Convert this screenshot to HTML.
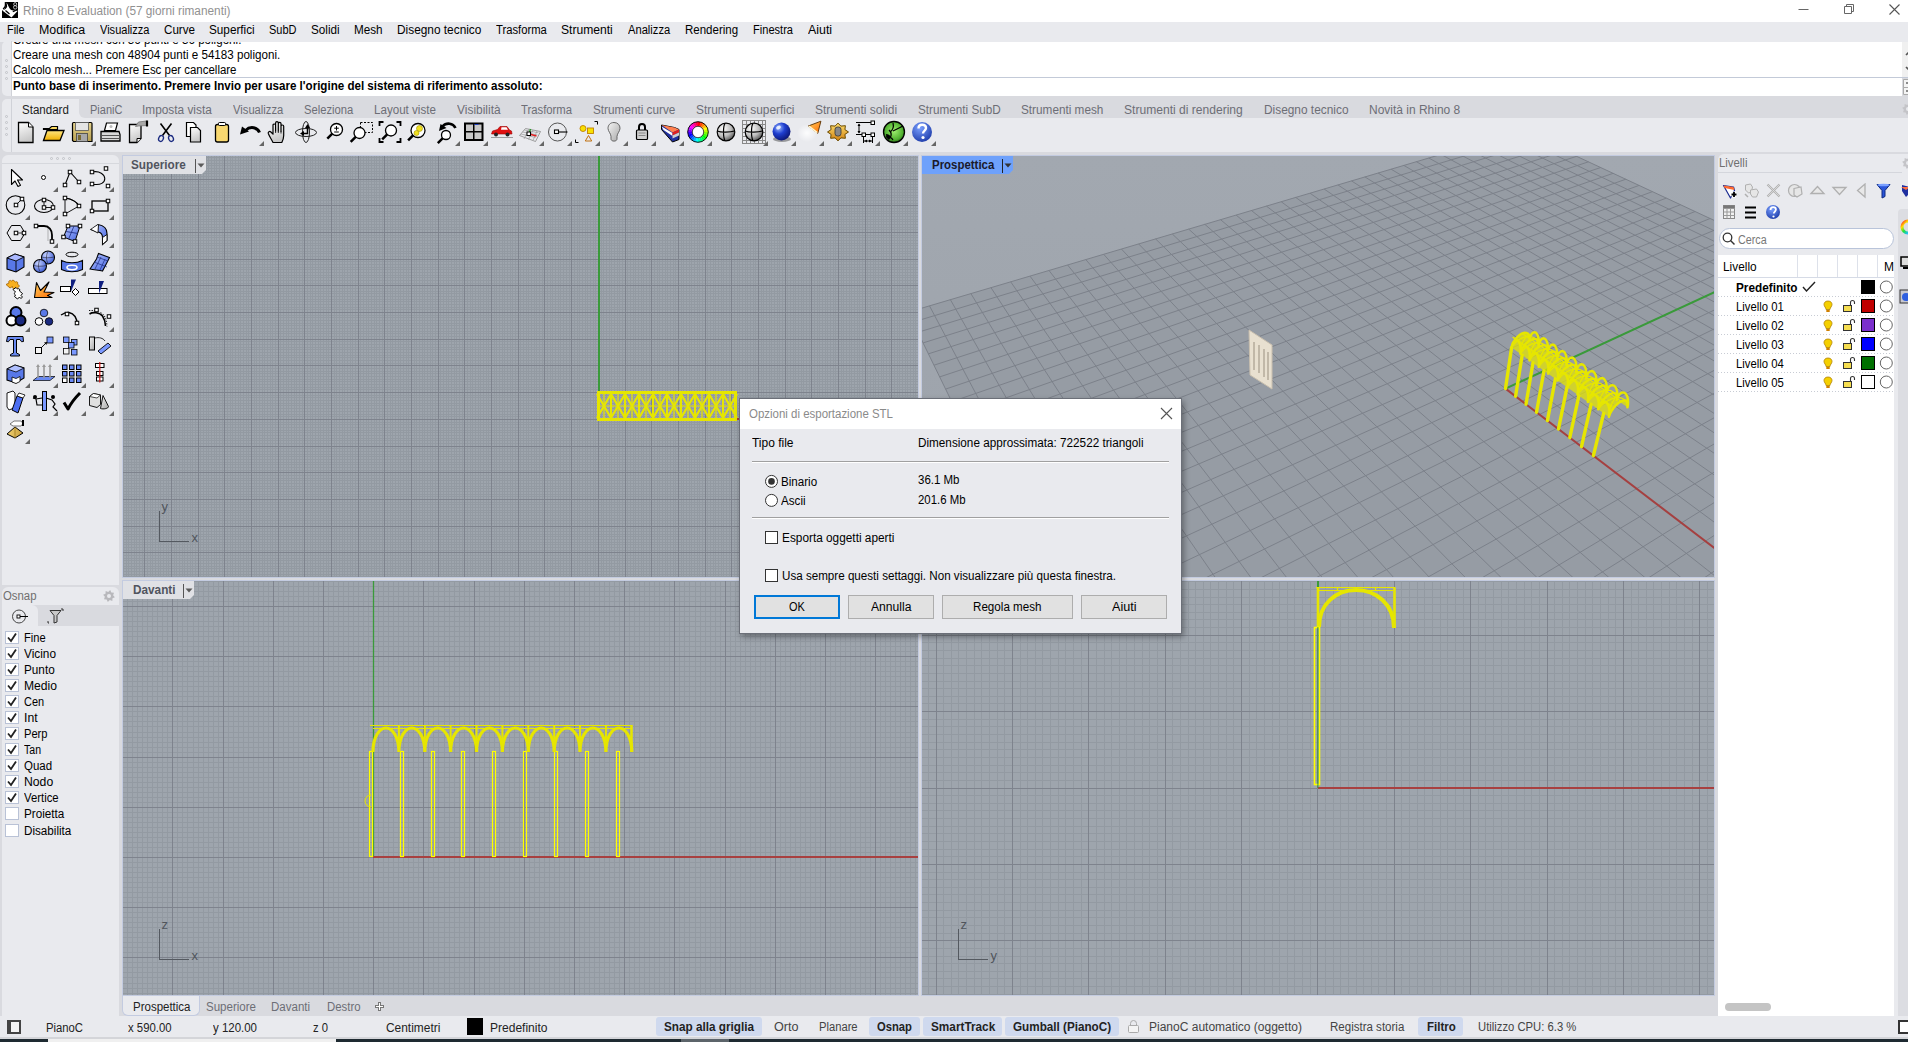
<!DOCTYPE html><html><head><meta charset="utf-8"><style>
html,body{margin:0;padding:0;}
body{width:1908px;height:1042px;overflow:hidden;position:relative;background:#d9dadf;font-family:"Liberation Sans",sans-serif;}
svg{overflow:hidden;display:block}
</style></head><body>
<div style="position:absolute;left:0px;top:0px;width:1908px;height:22px;background:#fff"></div>
<svg style="position:absolute;left:0px;top:0px;" width="22" height="22" viewBox="0 0 22 22"><path d="M5.5 2H18V18H2V10.5L4 9.5C5.5 8 6 5 5.5 2z" fill="#000"/><path d="M6.5 2.5C8 4.5 8.8 8 10.8 9.8 12.8 11 15.5 11 17.8 10.8L11.5 17.5 2.3 10.4C4.8 9.8 6.8 8.4 7.2 6.5z" fill="#fff"/><path d="M5.3 2.2C5.8 5 5 8 3 8.8" stroke="#000" stroke-width="1.3" fill="none"/><path d="M5.5 10.5l4 3.5" stroke="#000" stroke-width="1.2"/><path d="M12.8 11.8l2.5-1" stroke="#000" stroke-width="1.2"/><ellipse cx="15.2" cy="4.2" rx="1.5" ry="1.6" fill="none" stroke="#ccc" stroke-width="0.9"/><ellipse cx="15.2" cy="7.3" rx="1.7" ry="1.8" fill="none" stroke="#ccc" stroke-width="0.9"/></svg>
<div style="position:absolute;left:23px;top:5px;font:normal 12px/12px 'Liberation Sans',sans-serif;color:#919191;white-space:nowrap;transform:scaleX(0.9844);transform-origin:0 0;">Rhino 8 Evaluation (57 giorni rimanenti)</div>
<svg style="position:absolute;left:1790px;top:0px;" width="118" height="22" viewBox="0 0 118 22"><path d="M8.5 9.5h10" stroke="#666" stroke-width="1"/><path d="M56.5 6.5V4.5h7v7h-2M54.5 6.5h7v7h-7z" stroke="#666" fill="none" stroke-width="1"/><path d="M99.5 4.5l10 10M109.5 4.5l-10 10" stroke="#555" stroke-width="1.1"/></svg>
<div style="position:absolute;left:0px;top:22px;width:1908px;height:20px;background:#e9eaee"></div>
<div style="position:absolute;left:7.0px;top:24px;font:normal 12px/12px 'Liberation Sans',sans-serif;color:#000;white-space:nowrap;transform:scaleX(0.9051);transform-origin:0 0;">File</div>
<div style="position:absolute;left:39.0px;top:24px;font:normal 12px/12px 'Liberation Sans',sans-serif;color:#000;white-space:nowrap;transform:scaleX(1.0317);transform-origin:0 0;">Modifica</div>
<div style="position:absolute;left:99.7px;top:24px;font:normal 12px/12px 'Liberation Sans',sans-serif;color:#000;white-space:nowrap;transform:scaleX(0.9200);transform-origin:0 0;">Visualizza</div>
<div style="position:absolute;left:163.5px;top:24px;font:normal 12px/12px 'Liberation Sans',sans-serif;color:#000;white-space:nowrap;transform:scaleX(0.9685);transform-origin:0 0;">Curve</div>
<div style="position:absolute;left:208.5px;top:24px;font:normal 12px/12px 'Liberation Sans',sans-serif;color:#000;white-space:nowrap;transform:scaleX(0.9788);transform-origin:0 0;">Superfici</div>
<div style="position:absolute;left:268.5px;top:24px;font:normal 12px/12px 'Liberation Sans',sans-serif;color:#000;white-space:nowrap;transform:scaleX(0.9161);transform-origin:0 0;">SubD</div>
<div style="position:absolute;left:310.5px;top:24px;font:normal 12px/12px 'Liberation Sans',sans-serif;color:#000;white-space:nowrap;transform:scaleX(0.9745);transform-origin:0 0;">Solidi</div>
<div style="position:absolute;left:353.5px;top:24px;font:normal 12px/12px 'Liberation Sans',sans-serif;color:#000;white-space:nowrap;transform:scaleX(0.9747);transform-origin:0 0;">Mesh</div>
<div style="position:absolute;left:396.7px;top:24px;font:normal 12px/12px 'Liberation Sans',sans-serif;color:#000;white-space:nowrap;transform:scaleX(0.9885);transform-origin:0 0;">Disegno tecnico</div>
<div style="position:absolute;left:496.1px;top:24px;font:normal 12px/12px 'Liberation Sans',sans-serif;color:#000;white-space:nowrap;transform:scaleX(0.9368);transform-origin:0 0;">Trasforma</div>
<div style="position:absolute;left:561.4px;top:24px;font:normal 12px/12px 'Liberation Sans',sans-serif;color:#000;white-space:nowrap;transform:scaleX(1.0087);transform-origin:0 0;">Strumenti</div>
<div style="position:absolute;left:627.7px;top:24px;font:normal 12px/12px 'Liberation Sans',sans-serif;color:#000;white-space:nowrap;transform:scaleX(0.9304);transform-origin:0 0;">Analizza</div>
<div style="position:absolute;left:684.8px;top:24px;font:normal 12px/12px 'Liberation Sans',sans-serif;color:#000;white-space:nowrap;transform:scaleX(0.9590);transform-origin:0 0;">Rendering</div>
<div style="position:absolute;left:752.8px;top:24px;font:normal 12px/12px 'Liberation Sans',sans-serif;color:#000;white-space:nowrap;transform:scaleX(0.9228);transform-origin:0 0;">Finestra</div>
<div style="position:absolute;left:807.8px;top:24px;font:normal 12px/12px 'Liberation Sans',sans-serif;color:#000;white-space:nowrap;transform:scaleX(1.0324);transform-origin:0 0;">Aiuti</div>
<div style="position:absolute;left:2px;top:41px;width:10px;height:55px;background:#e9eaee;border-radius:5px 0 0 5px"></div>
<div style="position:absolute;left:11px;top:41px;width:1px;height:55px;background:#d0d2d8"></div>
<div style="position:absolute;left:12px;top:42px;width:1890px;height:54px;background:#fff"></div>
<div style="position:absolute;left:1902px;top:42px;width:6px;height:35px;background:#f0f0f0"></div>
<svg style="position:absolute;left:1902px;top:42px;" width="6" height="54" viewBox="0 0 6 54"><path d="M4 13l2.5-2.5M4 25l2.5 2.5" stroke="#555" stroke-width="1.6"/><path d="M1.5 37.5h5v8h-5zM1.5 45.5h5v7h-5z" stroke="#aaa" fill="#f4f4f4" stroke-width="1"/><path d="M4 41h3M4 49h3" stroke="#222" stroke-width="1"/></svg>
<div style="position:absolute;left:12px;top:77px;width:1896px;height:1px;background:#c3cad8"></div>
<div style="position:absolute;left:5px;top:58.5px;width:3px;height:3px;border:1px solid #c0c2c8;border-radius:50%;box-sizing:border-box"></div>
<div style="position:absolute;left:5px;top:64.5px;width:3px;height:3px;border:1px solid #c0c2c8;border-radius:50%;box-sizing:border-box"></div>
<div style="position:absolute;left:5px;top:70.5px;width:3px;height:3px;border:1px solid #c0c2c8;border-radius:50%;box-sizing:border-box"></div>
<div style="position:absolute;left:5px;top:76.5px;width:3px;height:3px;border:1px solid #c0c2c8;border-radius:50%;box-sizing:border-box"></div>
<div style="position:absolute;left:12px;top:42px;width:1890px;height:35px;overflow:hidden"><div style="position:absolute;left:1px;top:-8px;font:12px/12px 'Liberation Sans';color:#000;white-space:nowrap;transform:scaleX(0.967);transform-origin:0 0">Creare una mesh con 36 punti e 36 poligoni.</div></div>
<div style="position:absolute;left:13px;top:49px;font:normal 12px/12px 'Liberation Sans',sans-serif;color:#000;white-space:nowrap;transform:scaleX(0.9674);transform-origin:0 0;">Creare una mesh con 48904 punti e 54183 poligoni.</div>
<div style="position:absolute;left:13px;top:64px;font:normal 12px/12px 'Liberation Sans',sans-serif;color:#000;white-space:nowrap;transform:scaleX(0.9547);transform-origin:0 0;">Calcolo mesh... Premere Esc per cancellare</div>
<div style="position:absolute;left:13px;top:80px;font:bold 12px/12px 'Liberation Sans',sans-serif;color:#000;white-space:nowrap;transform:scaleX(0.9657);transform-origin:0 0;">Punto base di inserimento. Premere Invio per usare l'origine del sistema di riferimento assoluto:</div>
<div style="position:absolute;left:2px;top:99px;width:1906px;height:53px;background:#e9eaee;border-radius:5px 0 0 5px"></div>
<div style="position:absolute;left:11px;top:99px;width:1px;height:53px;background:#d0d2d8"></div>
<div style="position:absolute;left:79px;top:99px;width:1829px;height:19px;background:#d9dadf;border-radius:0 0 0 6px"></div>
<div style="position:absolute;left:12px;top:99px;width:67px;height:19px;background:#e9eaee;border-radius:0 6px 0 0"></div>
<div style="position:absolute;left:5px;top:114.5px;width:3px;height:3px;border:1px solid #c0c2c8;border-radius:50%;box-sizing:border-box"></div>
<div style="position:absolute;left:5px;top:120.5px;width:3px;height:3px;border:1px solid #c0c2c8;border-radius:50%;box-sizing:border-box"></div>
<div style="position:absolute;left:5px;top:126.5px;width:3px;height:3px;border:1px solid #c0c2c8;border-radius:50%;box-sizing:border-box"></div>
<div style="position:absolute;left:5px;top:132.5px;width:3px;height:3px;border:1px solid #c0c2c8;border-radius:50%;box-sizing:border-box"></div>
<div style="position:absolute;left:22.1px;top:104px;font:normal 12px/12px 'Liberation Sans',sans-serif;color:#222;white-space:nowrap;transform:scaleX(0.9609);transform-origin:0 0;">Standard</div>
<div style="position:absolute;left:89.7px;top:104px;font:normal 12px/12px 'Liberation Sans',sans-serif;color:#6d6e76;white-space:nowrap;transform:scaleX(0.9166);transform-origin:0 0;">PianiC</div>
<div style="position:absolute;left:142.4px;top:104px;font:normal 12px/12px 'Liberation Sans',sans-serif;color:#6d6e76;white-space:nowrap;transform:scaleX(0.9874);transform-origin:0 0;">Imposta vista</div>
<div style="position:absolute;left:232.6px;top:104px;font:normal 12px/12px 'Liberation Sans',sans-serif;color:#6d6e76;white-space:nowrap;transform:scaleX(0.9348);transform-origin:0 0;">Visualizza</div>
<div style="position:absolute;left:303.7px;top:104px;font:normal 12px/12px 'Liberation Sans',sans-serif;color:#6d6e76;white-space:nowrap;transform:scaleX(0.9354);transform-origin:0 0;">Seleziona</div>
<div style="position:absolute;left:373.9px;top:104px;font:normal 12px/12px 'Liberation Sans',sans-serif;color:#6d6e76;white-space:nowrap;transform:scaleX(0.9666);transform-origin:0 0;">Layout viste</div>
<div style="position:absolute;left:456.7px;top:104px;font:normal 12px/12px 'Liberation Sans',sans-serif;color:#6d6e76;white-space:nowrap;transform:scaleX(0.9955);transform-origin:0 0;">Visibilità</div>
<div style="position:absolute;left:521.1px;top:104px;font:normal 12px/12px 'Liberation Sans',sans-serif;color:#6d6e76;white-space:nowrap;transform:scaleX(0.9405);transform-origin:0 0;">Trasforma</div>
<div style="position:absolute;left:593.0px;top:104px;font:normal 12px/12px 'Liberation Sans',sans-serif;color:#6d6e76;white-space:nowrap;transform:scaleX(0.9806);transform-origin:0 0;">Strumenti curve</div>
<div style="position:absolute;left:696.3px;top:104px;font:normal 12px/12px 'Liberation Sans',sans-serif;color:#6d6e76;white-space:nowrap;transform:scaleX(0.9913);transform-origin:0 0;">Strumenti superfici</div>
<div style="position:absolute;left:815.3px;top:104px;font:normal 12px/12px 'Liberation Sans',sans-serif;color:#6d6e76;white-space:nowrap;transform:scaleX(1.0021);transform-origin:0 0;">Strumenti solidi</div>
<div style="position:absolute;left:917.9px;top:104px;font:normal 12px/12px 'Liberation Sans',sans-serif;color:#6d6e76;white-space:nowrap;transform:scaleX(0.9775);transform-origin:0 0;">Strumenti SubD</div>
<div style="position:absolute;left:1021.2px;top:104px;font:normal 12px/12px 'Liberation Sans',sans-serif;color:#6d6e76;white-space:nowrap;transform:scaleX(0.9806);transform-origin:0 0;">Strumenti mesh</div>
<div style="position:absolute;left:1124.2px;top:104px;font:normal 12px/12px 'Liberation Sans',sans-serif;color:#6d6e76;white-space:nowrap;transform:scaleX(1.0063);transform-origin:0 0;">Strumenti di rendering</div>
<div style="position:absolute;left:1264.0px;top:104px;font:normal 12px/12px 'Liberation Sans',sans-serif;color:#6d6e76;white-space:nowrap;transform:scaleX(0.9897);transform-origin:0 0;">Disegno tecnico</div>
<div style="position:absolute;left:1368.8px;top:104px;font:normal 12px/12px 'Liberation Sans',sans-serif;color:#6d6e76;white-space:nowrap;transform:scaleX(0.9980);transform-origin:0 0;">Novità in Rhino 8</div>
<div style="position:absolute;left:2px;top:155px;width:117px;height:430px;background:#e9eaee;border-radius:6px 6px 0 0"></div>
<div style="position:absolute;left:2px;top:163px;width:117px;height:1px;background:#d6d8dd"></div>
<div style="position:absolute;left:50.0px;top:157px;width:3px;height:3px;border:1px solid #c0c2c8;border-radius:50%;box-sizing:border-box"></div>
<div style="position:absolute;left:56.0px;top:157px;width:3px;height:3px;border:1px solid #c0c2c8;border-radius:50%;box-sizing:border-box"></div>
<div style="position:absolute;left:62.0px;top:157px;width:3px;height:3px;border:1px solid #c0c2c8;border-radius:50%;box-sizing:border-box"></div>
<div style="position:absolute;left:68.0px;top:157px;width:3px;height:3px;border:1px solid #c0c2c8;border-radius:50%;box-sizing:border-box"></div>
<div style="position:absolute;left:2px;top:587px;width:117px;height:429px;background:#e9eaee;border-radius:6px 6px 0 0"></div>
<div style="position:absolute;left:2.5px;top:590px;font:normal 12px/12px 'Liberation Sans',sans-serif;color:#6f6f6f;white-space:nowrap;transform:scaleX(0.9475);transform-origin:0 0;">Osnap</div>
<div style="position:absolute;left:2px;top:605px;width:117px;height:21px;background:#d9dadf"></div>
<div style="position:absolute;left:38px;top:605px;width:81px;height:21px;background:#d9dadf;border-radius:0 0 0 6px"></div>
<div style="position:absolute;left:2px;top:605px;width:36px;height:21px;background:#e9eaee;border-radius:0 6px 0 0"></div>
<div style="position:absolute;left:2px;top:626px;width:117px;height:390px;background:#e9eaee"></div>
<div style="position:absolute;left:1718px;top:154px;width:190px;height:862px;background:#e9eaee;border-radius:6px 0 0 0"></div>
<div style="position:absolute;left:0px;top:1016px;width:1908px;height:21px;background:#e9eaee"></div>
<div style="position:absolute;left:0px;top:1037px;width:1908px;height:2px;background:#d4d5d9"></div>
<div style="position:absolute;left:0px;top:1039px;width:1908px;height:3px;background:#1e2a31"></div>
<div style="position:absolute;left:48px;top:1039px;width:288px;height:3px;background:#f0f0f0"></div>
<div style="position:absolute;left:681px;top:1039px;width:48px;height:3px;background:#5c646a"></div>
<div style="position:absolute;left:122px;top:155px;width:797px;height:423px;background:#c3cbe0"></div>
<svg style="position:absolute;left:123px;top:156px;" width="795" height="421" viewBox="0 0 795 421"><rect width="795" height="421" fill="#9ea5ad"/><path d="M0.5 0V421M3.5 0V421M5.5 0V421M8.5 0V421M11.5 0V421M13.5 0V421M16.5 0V421M19.5 0V421M24.5 0V421M27.5 0V421M29.5 0V421M32.5 0V421M35.5 0V421M37.5 0V421M40.5 0V421M43.5 0V421M45.5 0V421M51.5 0V421M53.5 0V421M56.5 0V421M59.5 0V421M61.5 0V421M64.5 0V421M67.5 0V421M69.5 0V421M72.5 0V421M77.5 0V421M80.5 0V421M83.5 0V421M85.5 0V421M88.5 0V421M91.5 0V421M93.5 0V421M96.5 0V421M99.5 0V421M104.5 0V421M107.5 0V421M109.5 0V421M112.5 0V421M115.5 0V421M117.5 0V421M120.5 0V421M123.5 0V421M125.5 0V421M131.5 0V421M133.5 0V421M136.5 0V421M139.5 0V421M141.5 0V421M144.5 0V421M147.5 0V421M149.5 0V421M152.5 0V421M157.5 0V421M160.5 0V421M163.5 0V421M165.5 0V421M168.5 0V421M171.5 0V421M173.5 0V421M176.5 0V421M179.5 0V421M184.5 0V421M187.5 0V421M189.5 0V421M192.5 0V421M195.5 0V421M197.5 0V421M200.5 0V421M203.5 0V421M205.5 0V421M211.5 0V421M213.5 0V421M216.5 0V421M219.5 0V421M221.5 0V421M224.5 0V421M227.5 0V421M229.5 0V421M232.5 0V421M237.5 0V421M240.5 0V421M243.5 0V421M245.5 0V421M248.5 0V421M251.5 0V421M253.5 0V421M256.5 0V421M259.5 0V421M264.5 0V421M267.5 0V421M269.5 0V421M272.5 0V421M275.5 0V421M277.5 0V421M280.5 0V421M283.5 0V421M285.5 0V421M291.5 0V421M293.5 0V421M296.5 0V421M299.5 0V421M301.5 0V421M304.5 0V421M307.5 0V421M309.5 0V421M312.5 0V421M317.5 0V421M320.5 0V421M323.5 0V421M325.5 0V421M328.5 0V421M331.5 0V421M333.5 0V421M336.5 0V421M339.5 0V421M344.5 0V421M347.5 0V421M349.5 0V421M352.5 0V421M355.5 0V421M357.5 0V421M360.5 0V421M363.5 0V421M365.5 0V421M371.5 0V421M373.5 0V421M376.5 0V421M379.5 0V421M381.5 0V421M384.5 0V421M387.5 0V421M389.5 0V421M392.5 0V421M397.5 0V421M400.5 0V421M403.5 0V421M405.5 0V421M408.5 0V421M411.5 0V421M413.5 0V421M416.5 0V421M419.5 0V421M424.5 0V421M427.5 0V421M429.5 0V421M432.5 0V421M435.5 0V421M437.5 0V421M440.5 0V421M443.5 0V421M446.5 0V421M451.5 0V421M454.5 0V421M456.5 0V421M459.5 0V421M462.5 0V421M464.5 0V421M467.5 0V421M470.5 0V421M472.5 0V421M478.5 0V421M480.5 0V421M483.5 0V421M486.5 0V421M488.5 0V421M491.5 0V421M494.5 0V421M496.5 0V421M499.5 0V421M504.5 0V421M507.5 0V421M510.5 0V421M512.5 0V421M515.5 0V421M518.5 0V421M520.5 0V421M523.5 0V421M526.5 0V421M531.5 0V421M534.5 0V421M536.5 0V421M539.5 0V421M542.5 0V421M544.5 0V421M547.5 0V421M550.5 0V421M552.5 0V421M558.5 0V421M560.5 0V421M563.5 0V421M566.5 0V421M568.5 0V421M571.5 0V421M574.5 0V421M576.5 0V421M579.5 0V421M584.5 0V421M587.5 0V421M590.5 0V421M592.5 0V421M595.5 0V421M598.5 0V421M600.5 0V421M603.5 0V421M606.5 0V421M611.5 0V421M614.5 0V421M616.5 0V421M619.5 0V421M622.5 0V421M624.5 0V421M627.5 0V421M630.5 0V421M632.5 0V421M638.5 0V421M640.5 0V421M643.5 0V421M646.5 0V421M648.5 0V421M651.5 0V421M654.5 0V421M656.5 0V421M659.5 0V421M664.5 0V421M667.5 0V421M670.5 0V421M672.5 0V421M675.5 0V421M678.5 0V421M680.5 0V421M683.5 0V421M686.5 0V421M691.5 0V421M694.5 0V421M696.5 0V421M699.5 0V421M702.5 0V421M704.5 0V421M707.5 0V421M710.5 0V421M712.5 0V421M718.5 0V421M720.5 0V421M723.5 0V421M726.5 0V421M728.5 0V421M731.5 0V421M734.5 0V421M736.5 0V421M739.5 0V421M744.5 0V421M747.5 0V421M750.5 0V421M752.5 0V421M755.5 0V421M758.5 0V421M760.5 0V421M763.5 0V421M766.5 0V421M771.5 0V421M774.5 0V421M776.5 0V421M779.5 0V421M782.5 0V421M784.5 0V421M787.5 0V421M790.5 0V421M792.5 0V421M0 1.5H795M0 4.5H795M0 7.5H795M0 9.5H795M0 12.5H795M0 15.5H795M0 17.5H795M0 20.5H795M0 25.5H795M0 28.5H795M0 31.5H795M0 33.5H795M0 36.5H795M0 39.5H795M0 41.5H795M0 44.5H795M0 47.5H795M0 52.5H795M0 55.5H795M0 57.5H795M0 60.5H795M0 63.5H795M0 65.5H795M0 68.5H795M0 71.5H795M0 73.5H795M0 79.5H795M0 81.5H795M0 84.5H795M0 87.5H795M0 89.5H795M0 92.5H795M0 95.5H795M0 97.5H795M0 100.5H795M0 105.5H795M0 108.5H795M0 111.5H795M0 113.5H795M0 116.5H795M0 119.5H795M0 121.5H795M0 124.5H795M0 127.5H795M0 132.5H795M0 135.5H795M0 137.5H795M0 140.5H795M0 143.5H795M0 145.5H795M0 148.5H795M0 151.5H795M0 153.5H795M0 159.5H795M0 161.5H795M0 164.5H795M0 167.5H795M0 169.5H795M0 172.5H795M0 175.5H795M0 177.5H795M0 180.5H795M0 185.5H795M0 188.5H795M0 191.5H795M0 193.5H795M0 196.5H795M0 199.5H795M0 201.5H795M0 204.5H795M0 207.5H795M0 212.5H795M0 215.5H795M0 217.5H795M0 220.5H795M0 223.5H795M0 225.5H795M0 228.5H795M0 231.5H795M0 233.5H795M0 239.5H795M0 241.5H795M0 244.5H795M0 247.5H795M0 249.5H795M0 252.5H795M0 255.5H795M0 258.5H795M0 260.5H795M0 266.5H795M0 268.5H795M0 271.5H795M0 274.5H795M0 276.5H795M0 279.5H795M0 282.5H795M0 284.5H795M0 287.5H795M0 292.5H795M0 295.5H795M0 298.5H795M0 300.5H795M0 303.5H795M0 306.5H795M0 308.5H795M0 311.5H795M0 314.5H795M0 319.5H795M0 322.5H795M0 324.5H795M0 327.5H795M0 330.5H795M0 332.5H795M0 335.5H795M0 338.5H795M0 340.5H795M0 346.5H795M0 348.5H795M0 351.5H795M0 354.5H795M0 356.5H795M0 359.5H795M0 362.5H795M0 364.5H795M0 367.5H795M0 372.5H795M0 375.5H795M0 378.5H795M0 380.5H795M0 383.5H795M0 386.5H795M0 388.5H795M0 391.5H795M0 394.5H795M0 399.5H795M0 402.5H795M0 404.5H795M0 407.5H795M0 410.5H795M0 412.5H795M0 415.5H795M0 418.5H795M0 420.5H795" stroke="#939aa2" stroke-width="1" opacity="1.0" fill="none" shape-rendering="crispEdges"/><path d="M21.5 0V421M48.5 0V421M75.5 0V421M101.5 0V421M128.5 0V421M155.5 0V421M181.5 0V421M208.5 0V421M235.5 0V421M261.5 0V421M288.5 0V421M315.5 0V421M341.5 0V421M368.5 0V421M395.5 0V421M421.5 0V421M448.5 0V421M475.5 0V421M502.5 0V421M528.5 0V421M555.5 0V421M582.5 0V421M608.5 0V421M635.5 0V421M662.5 0V421M688.5 0V421M715.5 0V421M742.5 0V421M768.5 0V421M0 23.5H795M0 49.5H795M0 76.5H795M0 103.5H795M0 129.5H795M0 156.5H795M0 183.5H795M0 209.5H795M0 236.5H795M0 263.5H795M0 290.5H795M0 316.5H795M0 343.5H795M0 370.5H795M0 396.5H795" stroke="#7e838d" stroke-width="1" fill="none" shape-rendering="crispEdges"/><path d="M476 0V263" stroke="#3a9a3a" stroke-width="2"/><path d="M476 263H795" stroke="#a84040" stroke-width="2"/><g stroke="#e6e600" fill="none"><rect x="475.5" y="236.5" width="137" height="27" stroke-width="3"/><path d="M474.0 238L488.0 262M488.0 238L474.0 262" stroke-width="2.2"/><path d="M481.0 238V262M474.0 250H488.0" stroke-width="1.2"/><path d="M488.0 238L502.0 262M502.0 238L488.0 262" stroke-width="2.2"/><path d="M495.0 238V262M488.0 250H502.0" stroke-width="1.2"/><path d="M488.0 237V263" stroke-width="2"/><path d="M502.0 238L516.0 262M516.0 238L502.0 262" stroke-width="2.2"/><path d="M509.0 238V262M502.0 250H516.0" stroke-width="1.2"/><path d="M502.0 237V263" stroke-width="2"/><path d="M516.0 238L530.0 262M530.0 238L516.0 262" stroke-width="2.2"/><path d="M523.0 238V262M516.0 250H530.0" stroke-width="1.2"/><path d="M516.0 237V263" stroke-width="2"/><path d="M530.0 238L544.0 262M544.0 238L530.0 262" stroke-width="2.2"/><path d="M537.0 238V262M530.0 250H544.0" stroke-width="1.2"/><path d="M530.0 237V263" stroke-width="2"/><path d="M544.0 238L558.0 262M558.0 238L544.0 262" stroke-width="2.2"/><path d="M551.0 238V262M544.0 250H558.0" stroke-width="1.2"/><path d="M544.0 237V263" stroke-width="2"/><path d="M558.0 238L572.0 262M572.0 238L558.0 262" stroke-width="2.2"/><path d="M565.0 238V262M558.0 250H572.0" stroke-width="1.2"/><path d="M558.0 237V263" stroke-width="2"/><path d="M572.0 238L586.0 262M586.0 238L572.0 262" stroke-width="2.2"/><path d="M579.0 238V262M572.0 250H586.0" stroke-width="1.2"/><path d="M572.0 237V263" stroke-width="2"/><path d="M586.0 238L600.0 262M600.0 238L586.0 262" stroke-width="2.2"/><path d="M593.0 238V262M586.0 250H600.0" stroke-width="1.2"/><path d="M586.0 237V263" stroke-width="2"/><path d="M600.0 238L614.0 262M614.0 238L600.0 262" stroke-width="2.2"/><path d="M607.0 238V262M600.0 250H614.0" stroke-width="1.2"/><path d="M600.0 237V263" stroke-width="2"/></g><path d="M36.5 355V385.5H66" stroke="#545960" stroke-width="1" fill="none" shape-rendering="crispEdges"/><text x="38.5" y="354.5" font-family="Liberation Sans" font-size="13" fill="#50555c">y</text><text x="68.5" y="385.5" font-family="Liberation Sans" font-size="13" fill="#50555c">x</text></svg>
<div style="position:absolute;left:123px;top:156px;width:83px;height:18px;background:#e0e1e5;clip-path:polygon(0 0,100% 0,100% 14px,79px 100%,0 100%)"></div>
<div style="position:absolute;left:130.8px;top:159px;font:bold 12px/12px 'Liberation Sans',sans-serif;color:#50545e;white-space:nowrap;transform:scaleX(0.9783);transform-origin:0 0;">Superiore</div>
<div style="position:absolute;left:195px;top:159px;width:1px;height:14px;background:#555"></div>
<svg style="position:absolute;left:197px;top:163px;" width="8" height="5" viewBox="0 0 8 5"><path d="M0.5 0.5h7l-3.5 4z" fill="#5a5a5a"/></svg>
<div style="position:absolute;left:921px;top:155px;width:794px;height:423px;background:#c3cbe0"></div>
<svg style="position:absolute;left:922px;top:156px;" width="792" height="421" viewBox="0 0 792 421"><defs><linearGradient id="sky" x1="0" y1="0" x2="0" y2="1"><stop offset="0" stop-color="#a2a8b0"/><stop offset="1" stop-color="#9ca2aa"/></linearGradient></defs><rect width="792" height="421" fill="url(#sky)"/><polygon points="-13.9,156.2 599.4,-25.4 1368.9,333.1 520.5,1252.0" fill="#969ca4"/><path d="M-13.9 156.2L599.4 -25.4M-13.9 156.2L520.5 1252.0M-9.0 166.1L610.0 -20.5M7.5 149.9L564.6 1204.2M-4.0 176.3L620.8 -15.5M28.4 143.7L606.4 1159.0M1.1 186.9L631.8 -10.4M48.9 137.6L645.9 1116.2M6.5 197.8L643.1 -5.1M69.0 131.7L683.4 1075.6M12.0 209.2L654.7 0.3M88.7 125.8L719.1 1037.0M17.7 220.9L666.5 5.8M108.0 120.1L753.0 1000.2M23.6 233.1L678.7 11.5M127.0 114.5L785.3 965.2M29.8 245.7L691.2 17.3M145.6 109.0L816.1 931.9M36.2 258.7L703.9 23.2M163.8 103.6L845.5 900.0M42.8 272.3L717.1 29.4M181.7 98.3L873.6 869.6M49.7 286.4L730.5 35.6M199.4 93.0L900.5 840.4M56.8 301.1L744.3 42.1M216.6 87.9L926.3 812.5M64.3 316.4L758.5 48.7M233.6 82.9L950.9 785.8M72.0 332.3L773.1 55.5M250.3 78.0L974.6 760.2M80.1 348.9L788.1 62.5M266.7 73.1L997.3 735.5M88.6 366.2L803.5 69.6M282.8 68.3L1019.2 711.9M97.4 384.3L819.3 77.0M298.6 63.7L1040.2 689.1M106.6 403.2L835.6 84.6M314.1 59.1L1060.4 667.2M116.2 422.9L852.4 92.4M329.4 54.5L1079.9 646.2M126.3 443.7L869.7 100.5M344.4 50.1L1098.6 625.8M136.9 465.4L887.5 108.8M359.2 45.7L1116.7 606.3M148.1 488.2L905.8 117.3M373.7 41.4L1134.2 587.3M159.7 512.2L924.7 126.1M388.0 37.2L1151.0 569.1M172.0 537.4L944.3 135.2M402.1 33.0L1167.3 551.4M185.0 564.0L964.4 144.6M415.9 28.9L1183.0 534.4M198.7 592.1L985.2 154.3M429.5 24.9L1198.3 517.9M213.2 621.7L1006.7 164.3M442.9 20.9L1213.0 501.9M228.5 653.1L1028.9 174.7M456.1 17.0L1227.3 486.5M244.7 686.4L1051.9 185.4M469.1 13.2L1241.1 471.5M262.0 721.8L1075.7 196.4M481.8 9.4L1254.5 457.0M280.4 759.5L1100.3 207.9M494.4 5.7L1267.5 442.9M300.0 799.7L1125.8 219.8M506.8 2.0L1280.1 429.2M320.9 842.6L1152.3 232.1M519.0 -1.6L1292.4 416.0M343.3 888.6L1179.7 244.9M531.0 -5.2L1304.2 403.1M367.4 938.0L1208.3 258.2M542.8 -8.7L1315.8 390.6M393.3 991.1L1237.9 272.0M554.5 -12.1L1327.0 378.4M421.3 1048.5L1268.7 286.4M566.0 -15.5L1337.9 366.6M451.7 1110.7L1300.7 301.3M577.3 -18.9L1348.5 355.1M484.6 1178.3L1334.1 316.9M588.4 -22.2L1358.9 344.0M520.5 1252.0L1368.9 333.1M599.4 -25.4L1368.9 333.1" stroke="#7c818a" stroke-width="1" fill="none"/><path d="M583.5 232.6L1098.6 625.8" stroke="#a54040" stroke-width="2"/><path d="M583.5 232.6L869.7 100.5" stroke="#3a9a3a" stroke-width="2"/><polygon points="327,174 350,189 350,233 328,219" fill="#e8e0d0" stroke="#c9bfae" stroke-width="1"/><path d="M332 186v28M337 189v28M342 193v28M346 196v28" stroke="#9a9080" stroke-width="1"/><polygon points="589.6,191.6 686.9,260.9 686.9,260.9 687.9,258.0 689.5,255.0 691.5,252.0 693.9,249.3 696.4,247.0 699.0,245.4 701.3,244.6 703.3,244.5 704.7,245.2 705.6,246.7 705.9,248.8 705.5,251.3 607.6,183.8 607.6,183.8 607.7,181.3 607.2,179.2 606.1,177.7 604.5,176.9 602.5,176.8 600.2,177.4 597.8,178.8 595.5,180.8 593.3,183.2 591.6,186.0 590.3,188.8 589.6,191.6" fill="#e6e600" opacity="0.72"/><g stroke="#e6e600" fill="none" stroke-linecap="round"><path d="M589.6 191.6L591.0 189.4L593.1 187.0L595.6 184.8L598.4 182.8L601.5 181.4L604.7 180.5L607.7 180.4L610.5 181.0L612.8 182.3L614.7 184.3L615.9 186.9L616.5 189.9M607.6 183.8L608.4 181.8L608.7 180.2L608.3 179.2L607.5 178.9L606.2 179.3L604.7 180.5L603.0 182.4L601.4 184.9L600.0 187.9L599.0 191.2L598.4 194.6L598.5 197.9M598.5 197.9L599.9 195.7L602.0 193.3L604.5 191.1L607.5 189.1L610.6 187.6L613.8 186.8L616.8 186.6L619.6 187.2L622.0 188.6L623.8 190.6L625.0 193.2L625.6 196.2M616.5 189.9L617.4 188.0L617.7 186.4L617.4 185.4L616.6 185.1L615.3 185.6L613.8 186.8L612.1 188.7L610.5 191.2L609.1 194.3L608.1 197.6L607.5 201.0L607.5 204.4M607.5 204.4L609.0 202.1L611.1 199.8L613.7 197.5L616.7 195.5L619.8 194.0L623.0 193.2L626.1 193.0L628.9 193.6L631.3 194.9L633.1 197.0L634.3 199.6L634.9 202.6M625.6 196.2L626.5 194.2L626.9 192.7L626.6 191.7L625.8 191.5L624.6 191.9L623.0 193.2L621.4 195.1L619.8 197.7L618.4 200.8L617.3 204.1L616.7 207.6L616.7 210.9M616.7 210.9L618.3 208.7L620.4 206.3L623.1 204.0L626.1 202.1L629.3 200.6L632.5 199.7L635.6 199.5L638.4 200.1L640.8 201.4L642.6 203.5L643.8 206.1L644.4 209.2M634.9 202.6L635.9 200.7L636.2 199.1L636.0 198.2L635.2 197.9L634.0 198.4L632.5 199.7L630.9 201.7L629.2 204.3L627.8 207.4L626.7 210.8L626.1 214.3L626.1 217.6M626.1 217.6L627.7 215.4L629.9 213.0L632.6 210.7L635.6 208.7L638.9 207.2L642.1 206.3L645.3 206.1L648.1 206.7L650.4 208.1L652.3 210.1L653.5 212.8L654.0 215.8M644.4 209.2L645.4 207.2L645.8 205.7L645.6 204.7L644.8 204.5L643.6 205.0L642.1 206.3L640.5 208.3L638.9 211.0L637.5 214.1L636.4 217.5L635.8 221.1L635.7 224.5M635.7 224.5L637.4 222.2L639.6 219.8L642.3 217.5L645.4 215.5L648.7 214.0L652.0 213.1L655.1 212.9L658.0 213.5L660.3 214.8L662.2 216.9L663.3 219.5L663.9 222.7M654.0 215.8L655.1 213.9L655.5 212.4L655.4 211.4L654.6 211.2L653.5 211.8L652.0 213.1L650.4 215.2L648.7 217.8L647.3 221.0L646.2 224.5L645.6 228.0L645.5 231.5M645.5 231.5L647.2 229.2L649.5 226.8L652.3 224.5L655.4 222.5L658.7 220.9L662.0 220.0L665.2 219.8L668.1 220.4L670.4 221.7L672.2 223.8L673.4 226.5L674.0 229.6M663.9 222.7L665.0 220.7L665.5 219.2L665.4 218.3L664.7 218.1L663.5 218.7L662.0 220.0L660.4 222.1L658.8 224.8L657.3 228.0L656.2 231.5L655.6 235.1L655.5 238.6M655.5 238.6L657.3 236.3L659.6 233.9L662.4 231.6L665.6 229.6L669.0 228.0L672.3 227.1L675.5 226.9L678.4 227.4L680.7 228.8L682.5 230.9L683.7 233.5L684.3 236.7M674.0 229.6L675.1 227.6L675.7 226.1L675.6 225.2L674.9 225.1L673.8 225.7L672.3 227.1L670.7 229.2L669.1 232.0L667.6 235.2L666.5 238.8L665.8 242.4L665.8 245.9M665.8 245.9L667.6 243.6L669.9 241.2L672.8 238.9L676.0 236.8L679.4 235.3L682.8 234.3L686.0 234.1L688.9 234.7L691.3 236.0L693.1 238.1L694.2 240.8L694.8 243.9M684.3 236.7L685.5 234.7L686.0 233.2L686.0 232.4L685.3 232.2L684.2 232.9L682.8 234.3L681.2 236.5L679.5 239.3L678.1 242.6L677.0 246.2L676.3 249.8L676.2 253.3M676.2 253.3L678.1 251.1L680.5 248.6L683.4 246.3L686.7 244.2L690.1 242.7L693.5 241.7L696.7 241.5L699.6 242.0L702.0 243.4L703.8 245.4L705.0 248.2L705.5 251.3M694.8 243.9L696.0 242.0L696.6 240.5L696.6 239.7L696.0 239.5L694.9 240.2L693.5 241.7L691.9 243.9L690.3 246.8L688.8 250.1L687.6 253.7L687.0 257.4L686.9 260.9M600.2 177.4L699.0 245.4M591.1 181.4L689.5 250.2" stroke-width="1.3"/><path d="M589.6 191.6L590.3 188.8L591.6 186.0L593.3 183.2L595.5 180.8L597.8 178.8L600.2 177.4L602.5 176.8L604.5 176.9L606.1 177.7L607.2 179.2L607.7 181.3L607.6 183.8M598.5 197.9L599.2 195.1L600.5 192.3L602.3 189.5L604.4 187.0L606.8 185.0L609.2 183.6L611.5 183.0L613.5 183.0L615.1 183.9L616.2 185.4L616.6 187.4L616.5 189.9M607.5 204.4L608.3 201.6L609.6 198.7L611.4 195.9L613.6 193.4L616.0 191.4L618.4 190.0L620.7 189.3L622.7 189.3L624.3 190.1L625.3 191.6L625.8 193.7L625.6 196.2M616.7 210.9L617.5 208.1L618.9 205.2L620.7 202.4L622.9 199.9L625.3 197.8L627.8 196.4L630.0 195.7L632.1 195.7L633.6 196.5L634.7 198.0L635.1 200.1L634.9 202.6M626.1 217.6L626.9 214.8L628.3 211.9L630.2 209.0L632.4 206.5L634.9 204.4L637.3 203.0L639.6 202.2L641.6 202.3L643.2 203.1L644.2 204.6L644.6 206.6L644.4 209.2M635.7 224.5L636.6 221.7L638.0 218.7L639.9 215.8L642.1 213.3L644.6 211.2L647.0 209.7L649.4 208.9L651.4 209.0L652.9 209.7L653.9 211.2L654.3 213.3L654.0 215.8M645.5 231.5L646.4 228.6L647.9 225.6L649.8 222.8L652.1 220.2L654.5 218.0L657.0 216.5L659.3 215.8L661.3 215.8L662.8 216.5L663.8 218.0L664.2 220.1L663.9 222.7M655.5 238.6L656.4 235.7L657.9 232.7L659.9 229.8L662.2 227.2L664.7 225.1L667.2 223.5L669.5 222.7L671.5 222.7L673.0 223.5L673.9 225.0L674.3 227.1L674.0 229.6M665.8 245.9L666.7 243.0L668.2 240.0L670.2 237.1L672.5 234.4L675.0 232.2L677.5 230.7L679.9 229.9L681.8 229.8L683.3 230.6L684.3 232.1L684.6 234.1L684.3 236.7M676.2 253.3L677.2 250.4L678.7 247.4L680.7 244.4L683.1 241.8L685.6 239.6L688.1 238.0L690.5 237.1L692.4 237.1L693.9 237.8L694.8 239.3L695.1 241.4L694.8 243.9M686.9 260.9L687.9 258.0L689.5 255.0L691.5 252.0L693.9 249.3L696.4 247.0L699.0 245.4L701.3 244.6L703.3 244.5L704.7 245.2L705.6 246.7L705.9 248.8L705.5 251.3M589.6 191.6L590.1 189.1L590.9 186.9L592.0 185.3L593.1 184.3L594.4 184.0L595.6 184.5L596.7 185.6L597.6 187.4L598.3 189.7L598.7 192.4L598.7 195.2L598.5 197.9M607.6 183.8L608.1 181.3L609.0 179.1L610.0 177.5L611.2 176.5L612.5 176.2L613.7 176.6L614.8 177.8L615.7 179.5L616.4 181.8L616.8 184.4L616.8 187.2L616.5 189.9M598.5 197.9L599.0 195.4L599.9 193.2L600.9 191.6L602.1 190.6L603.4 190.3L604.6 190.8L605.8 192.0L606.7 193.8L607.4 196.1L607.7 198.8L607.8 201.6L607.5 204.4M616.5 189.9L617.1 187.4L618.0 185.3L619.1 183.6L620.3 182.6L621.6 182.3L622.8 182.8L624.0 184.0L624.9 185.7L625.6 188.0L625.9 190.7L625.9 193.5L625.6 196.2M607.5 204.4L608.1 201.8L609.0 199.7L610.1 198.0L611.3 197.0L612.6 196.8L613.9 197.3L615.0 198.5L616.0 200.3L616.6 202.7L617.0 205.3L617.0 208.2L616.7 210.9M625.6 196.2L626.2 193.7L627.1 191.5L628.3 189.9L629.5 188.9L630.8 188.6L632.1 189.1L633.3 190.3L634.2 192.1L634.9 194.4L635.2 197.1L635.2 199.9L634.9 202.6M616.7 210.9L617.3 208.4L618.3 206.2L619.4 204.6L620.7 203.6L622.0 203.4L623.3 203.9L624.4 205.1L625.4 206.9L626.1 209.3L626.4 212.0L626.5 214.9L626.1 217.6M634.9 202.6L635.6 200.1L636.5 197.9L637.7 196.3L639.0 195.3L640.3 195.0L641.6 195.5L642.8 196.7L643.7 198.6L644.4 200.9L644.7 203.6L644.7 206.4L644.4 209.2M626.1 217.6L626.8 215.1L627.7 212.9L628.9 211.3L630.2 210.3L631.6 210.1L632.9 210.6L634.1 211.8L635.1 213.7L635.7 216.1L636.1 218.8L636.1 221.7L635.7 224.5M644.4 209.2L645.1 206.6L646.0 204.4L647.2 202.8L648.6 201.8L650.0 201.6L651.3 202.1L652.5 203.3L653.5 205.2L654.1 207.5L654.5 210.2L654.4 213.1L654.0 215.8M635.7 224.5L636.4 221.9L637.4 219.7L638.6 218.1L639.9 217.2L641.3 216.9L642.7 217.5L643.9 218.7L644.9 220.6L645.6 223.0L645.9 225.8L645.9 228.7L645.5 231.5M654.0 215.8L654.8 213.3L655.8 211.1L657.0 209.5L658.4 208.5L659.8 208.3L661.2 208.8L662.4 210.0L663.4 211.9L664.0 214.3L664.4 217.0L664.3 219.8L663.9 222.7M645.5 231.5L646.3 228.9L647.3 226.7L648.5 225.1L649.9 224.1L651.3 223.9L652.7 224.5L654.0 225.8L655.0 227.7L655.7 230.1L656.0 232.9L656.0 235.8L655.5 238.6M663.9 222.7L664.7 220.1L665.7 217.9L667.0 216.3L668.4 215.3L669.9 215.1L671.3 215.6L672.5 216.9L673.5 218.8L674.2 221.2L674.5 223.9L674.4 226.8L674.0 229.6M655.5 238.6L656.3 236.0L657.4 233.8L658.6 232.2L660.1 231.3L661.5 231.1L663.0 231.6L664.2 232.9L665.2 234.9L665.9 237.3L666.3 240.1L666.2 243.0L665.8 245.9M674.0 229.6L674.8 227.0L675.9 224.8L677.2 223.2L678.6 222.3L680.1 222.0L681.6 222.6L682.8 223.9L683.8 225.8L684.5 228.2L684.8 231.0L684.7 233.9L684.3 236.7M665.8 245.9L666.6 243.3L667.6 241.1L669.0 239.5L670.4 238.6L672.0 238.4L673.4 239.0L674.7 240.3L675.7 242.3L676.4 244.7L676.7 247.5L676.7 250.5L676.2 253.3M684.3 236.7L685.1 234.1L686.2 231.9L687.6 230.3L689.1 229.4L690.6 229.2L692.1 229.7L693.4 231.0L694.4 233.0L695.1 235.4L695.4 238.2L695.3 241.1L694.8 243.9M676.2 253.3L677.0 250.7L678.2 248.5L679.5 246.9L681.1 246.0L682.6 245.8L684.1 246.4L685.4 247.8L686.4 249.8L687.1 252.3L687.5 255.1L687.4 258.1L686.9 260.9M694.8 243.9L695.6 241.3L696.8 239.2L698.2 237.5L699.7 236.6L701.3 236.4L702.8 237.0L704.1 238.3L705.2 240.3L705.8 242.8L706.1 245.6L706.0 248.5L705.5 251.3" stroke-width="2.4"/><path d="M583.5 232.6L589.6 191.6" stroke-width="3.4"/><path d="M593.6 240.3L600.2 199.1" stroke-width="3.4"/><path d="M604.0 248.2L611.0 206.8" stroke-width="3.4"/><path d="M614.5 256.3L622.0 214.7" stroke-width="3.4"/><path d="M625.4 264.6L633.4 222.8" stroke-width="3.4"/><path d="M636.5 273.0L645.0 231.1" stroke-width="3.4"/><path d="M647.8 281.7L656.9 239.6" stroke-width="3.4"/><path d="M659.5 290.6L669.1 248.3" stroke-width="3.4"/><path d="M671.4 299.7L681.7 257.2" stroke-width="3.4"/></g></svg>
<div style="position:absolute;left:922px;top:156px;width:91px;height:18px;background:#6ea1fb;clip-path:polygon(0 0,100% 0,100% 14px,87px 100%,0 100%)"></div>
<div style="position:absolute;left:931.5px;top:159px;font:bold 12px/12px 'Liberation Sans',sans-serif;color:#1a1a2a;white-space:nowrap;transform:scaleX(0.9532);transform-origin:0 0;">Prospettica</div>
<div style="position:absolute;left:1002px;top:159px;width:1px;height:14px;background:#222"></div>
<svg style="position:absolute;left:1004px;top:163px;" width="8" height="5" viewBox="0 0 8 5"><path d="M0.5 0.5h7l-3.5 4z" fill="#333"/></svg>
<div style="position:absolute;left:122px;top:580px;width:797px;height:416px;background:#c3cbe0"></div>
<svg style="position:absolute;left:123px;top:581px;" width="795" height="414" viewBox="0 0 795 414"><rect width="795" height="414" fill="#9ea5ad"/><path d="M4.5 0V414M9.5 0V414M14.5 0V414M19.5 0V414M24.5 0V414M29.5 0V414M34.5 0V414M39.5 0V414M44.5 0V414M54.5 0V414M59.5 0V414M64.5 0V414M70.5 0V414M75.5 0V414M80.5 0V414M85.5 0V414M90.5 0V414M95.5 0V414M105.5 0V414M110.5 0V414M115.5 0V414M120.5 0V414M125.5 0V414M130.5 0V414M135.5 0V414M140.5 0V414M145.5 0V414M155.5 0V414M160.5 0V414M165.5 0V414M170.5 0V414M175.5 0V414M180.5 0V414M185.5 0V414M190.5 0V414M195.5 0V414M205.5 0V414M210.5 0V414M215.5 0V414M220.5 0V414M225.5 0V414M230.5 0V414M235.5 0V414M240.5 0V414M245.5 0V414M255.5 0V414M260.5 0V414M265.5 0V414M270.5 0V414M275.5 0V414M280.5 0V414M285.5 0V414M290.5 0V414M295.5 0V414M305.5 0V414M310.5 0V414M315.5 0V414M321.5 0V414M326.5 0V414M331.5 0V414M336.5 0V414M341.5 0V414M346.5 0V414M356.5 0V414M361.5 0V414M366.5 0V414M371.5 0V414M376.5 0V414M381.5 0V414M386.5 0V414M391.5 0V414M396.5 0V414M406.5 0V414M411.5 0V414M416.5 0V414M421.5 0V414M426.5 0V414M431.5 0V414M436.5 0V414M441.5 0V414M446.5 0V414M456.5 0V414M461.5 0V414M466.5 0V414M471.5 0V414M476.5 0V414M481.5 0V414M486.5 0V414M491.5 0V414M496.5 0V414M506.5 0V414M511.5 0V414M516.5 0V414M521.5 0V414M526.5 0V414M531.5 0V414M536.5 0V414M541.5 0V414M546.5 0V414M556.5 0V414M561.5 0V414M566.5 0V414M572.5 0V414M577.5 0V414M582.5 0V414M587.5 0V414M592.5 0V414M597.5 0V414M607.5 0V414M612.5 0V414M617.5 0V414M622.5 0V414M627.5 0V414M632.5 0V414M637.5 0V414M642.5 0V414M647.5 0V414M657.5 0V414M662.5 0V414M667.5 0V414M672.5 0V414M677.5 0V414M682.5 0V414M687.5 0V414M692.5 0V414M697.5 0V414M707.5 0V414M712.5 0V414M717.5 0V414M722.5 0V414M727.5 0V414M732.5 0V414M737.5 0V414M742.5 0V414M747.5 0V414M757.5 0V414M762.5 0V414M767.5 0V414M772.5 0V414M777.5 0V414M782.5 0V414M787.5 0V414M792.5 0V414M0 0.5H795M0 5.5H795M0 10.5H795M0 15.5H795M0 20.5H795M0 30.5H795M0 35.5H795M0 40.5H795M0 45.5H795M0 50.5H795M0 55.5H795M0 60.5H795M0 65.5H795M0 70.5H795M0 80.5H795M0 85.5H795M0 90.5H795M0 95.5H795M0 100.5H795M0 105.5H795M0 110.5H795M0 115.5H795M0 120.5H795M0 130.5H795M0 135.5H795M0 140.5H795M0 145.5H795M0 151.5H795M0 156.5H795M0 161.5H795M0 166.5H795M0 171.5H795M0 181.5H795M0 186.5H795M0 191.5H795M0 196.5H795M0 201.5H795M0 206.5H795M0 211.5H795M0 216.5H795M0 221.5H795M0 231.5H795M0 236.5H795M0 241.5H795M0 246.5H795M0 251.5H795M0 256.5H795M0 261.5H795M0 266.5H795M0 271.5H795M0 281.5H795M0 286.5H795M0 291.5H795M0 296.5H795M0 301.5H795M0 306.5H795M0 311.5H795M0 316.5H795M0 321.5H795M0 331.5H795M0 336.5H795M0 341.5H795M0 346.5H795M0 351.5H795M0 356.5H795M0 361.5H795M0 366.5H795M0 371.5H795M0 381.5H795M0 386.5H795M0 391.5H795M0 396.5H795M0 402.5H795M0 407.5H795M0 412.5H795" stroke="#939aa2" stroke-width="1" opacity="1.0" fill="none" shape-rendering="crispEdges"/><path d="M49.5 0V414M100.5 0V414M150.5 0V414M200.5 0V414M250.5 0V414M300.5 0V414M351.5 0V414M401.5 0V414M451.5 0V414M501.5 0V414M551.5 0V414M602.5 0V414M652.5 0V414M702.5 0V414M752.5 0V414M0 25.5H795M0 75.5H795M0 125.5H795M0 176.5H795M0 226.5H795M0 276.5H795M0 326.5H795M0 376.5H795" stroke="#7e838d" stroke-width="1" fill="none" shape-rendering="crispEdges"/><path d="M250.5 0V276" stroke="#3a9a3a" stroke-width="1.3"/><path d="M250 276H795" stroke="#a84040" stroke-width="2"/><g fill="none" stroke="#e6e600"><rect x="246.5" y="170.5" width="3" height="105" stroke-width="1.2" stroke="#ffff00"/><rect x="277.5" y="170.5" width="3" height="105" stroke-width="1.2" stroke="#ffff00"/><rect x="308.5" y="170.5" width="3" height="105" stroke-width="1.2" stroke="#ffff00"/><rect x="338.5" y="170.5" width="3" height="105" stroke-width="1.2" stroke="#ffff00"/><rect x="369.5" y="170.5" width="3" height="105" stroke-width="1.2" stroke="#ffff00"/><rect x="400.5" y="170.5" width="3" height="105" stroke-width="1.2" stroke="#ffff00"/><rect x="431.5" y="170.5" width="3" height="105" stroke-width="1.2" stroke="#ffff00"/><rect x="462.5" y="170.5" width="3" height="105" stroke-width="1.2" stroke="#ffff00"/><rect x="493.5" y="170.5" width="3" height="105" stroke-width="1.2" stroke="#ffff00"/><path d="M247 144.5H509M250 147.5H509" stroke-width="1.2"/><path d="M508.5 144V171" stroke-width="2.5"/><path d="M250.0 171C250.0 155 256.9 147 262.9 147C268.9 147 275.9 155 275.9 171M275.9 171C275.9 155 282.8 147 288.8 147C294.8 147 301.8 155 301.8 171M301.8 171C301.8 155 308.7 147 314.7 147C320.7 147 327.6 155 327.6 171M327.6 171C327.6 155 334.6 147 340.6 147C346.6 147 353.5 155 353.5 171M353.5 171C353.5 155 360.5 147 366.5 147C372.5 147 379.4 155 379.4 171M379.4 171C379.4 155 386.3 147 392.3 147C398.3 147 405.3 155 405.3 171M405.3 171C405.3 155 412.2 147 418.2 147C424.2 147 431.2 155 431.2 171M431.2 171C431.2 155 438.1 147 444.1 147C450.1 147 457.0 155 457.0 171M457.0 171C457.0 155 464.0 147 470.0 147C476.0 147 482.9 155 482.9 171M482.9 171C482.9 155 489.9 147 495.9 147C501.9 147 508.8 155 508.8 171" stroke-width="3.2"/><path d="M275.9 145V167M301.8 145V167M327.6 145V167M353.5 145V167M379.4 145V167M405.3 145V167M431.2 145V167M457.0 145V167M482.9 145V167" stroke-width="2"/><path d="M248 214a6 6 0 0 0 0 12" stroke-width="1"/></g><path d="M36.5 348V378.5H66" stroke="#545960" stroke-width="1" fill="none" shape-rendering="crispEdges"/><text x="38.5" y="347.5" font-family="Liberation Sans" font-size="13" fill="#50555c">z</text><text x="68.5" y="378.5" font-family="Liberation Sans" font-size="13" fill="#50555c">x</text></svg>
<div style="position:absolute;left:123px;top:581px;width:71px;height:18px;background:#e0e1e5;clip-path:polygon(0 0,100% 0,100% 14px,67px 100%,0 100%)"></div>
<div style="position:absolute;left:132.6px;top:584px;font:bold 12px/12px 'Liberation Sans',sans-serif;color:#50545e;white-space:nowrap;transform:scaleX(0.9804);transform-origin:0 0;">Davanti</div>
<div style="position:absolute;left:183px;top:584px;width:1px;height:14px;background:#555"></div>
<svg style="position:absolute;left:185px;top:588px;" width="8" height="5" viewBox="0 0 8 5"><path d="M0.5 0.5h7l-3.5 4z" fill="#5a5a5a"/></svg>
<div style="position:absolute;left:921px;top:580px;width:794px;height:416px;background:#c3cbe0"></div>
<svg style="position:absolute;left:922px;top:581px;" width="792" height="414" viewBox="0 0 792 414"><rect width="792" height="414" fill="#9ea5ad"/><path d="M6.5 0V414M21.5 0V414M29.5 0V414M36.5 0V414M44.5 0V414M52.5 0V414M59.5 0V414M67.5 0V414M75.5 0V414M82.5 0V414M98.5 0V414M105.5 0V414M113.5 0V414M120.5 0V414M128.5 0V414M136.5 0V414M143.5 0V414M151.5 0V414M159.5 0V414M174.5 0V414M182.5 0V414M189.5 0V414M197.5 0V414M204.5 0V414M212.5 0V414M220.5 0V414M227.5 0V414M235.5 0V414M250.5 0V414M258.5 0V414M266.5 0V414M273.5 0V414M281.5 0V414M288.5 0V414M296.5 0V414M304.5 0V414M311.5 0V414M327.5 0V414M334.5 0V414M342.5 0V414M350.5 0V414M357.5 0V414M365.5 0V414M372.5 0V414M380.5 0V414M388.5 0V414M403.5 0V414M411.5 0V414M418.5 0V414M426.5 0V414M434.5 0V414M441.5 0V414M449.5 0V414M456.5 0V414M464.5 0V414M479.5 0V414M487.5 0V414M495.5 0V414M502.5 0V414M510.5 0V414M518.5 0V414M525.5 0V414M533.5 0V414M541.5 0V414M556.5 0V414M563.5 0V414M571.5 0V414M579.5 0V414M586.5 0V414M594.5 0V414M602.5 0V414M609.5 0V414M617.5 0V414M632.5 0V414M640.5 0V414M647.5 0V414M655.5 0V414M663.5 0V414M670.5 0V414M678.5 0V414M686.5 0V414M693.5 0V414M709.5 0V414M716.5 0V414M724.5 0V414M731.5 0V414M739.5 0V414M747.5 0V414M754.5 0V414M762.5 0V414M770.5 0V414M785.5 0V414M0 0.5H792M0 8.5H792M0 16.5H792M0 23.5H792M0 31.5H792M0 38.5H792M0 46.5H792M0 61.5H792M0 69.5H792M0 77.5H792M0 84.5H792M0 92.5H792M0 100.5H792M0 107.5H792M0 115.5H792M0 122.5H792M0 138.5H792M0 145.5H792M0 153.5H792M0 161.5H792M0 168.5H792M0 176.5H792M0 184.5H792M0 191.5H792M0 199.5H792M0 214.5H792M0 222.5H792M0 229.5H792M0 237.5H792M0 245.5H792M0 252.5H792M0 260.5H792M0 268.5H792M0 275.5H792M0 291.5H792M0 298.5H792M0 306.5H792M0 313.5H792M0 321.5H792M0 329.5H792M0 336.5H792M0 344.5H792M0 352.5H792M0 367.5H792M0 375.5H792M0 382.5H792M0 390.5H792M0 397.5H792M0 405.5H792M0 413.5H792" stroke="#939aa2" stroke-width="1" opacity="1.0" fill="none" shape-rendering="crispEdges"/><path d="M14.5 0V414M90.5 0V414M166.5 0V414M243.5 0V414M319.5 0V414M395.5 0V414M472.5 0V414M548.5 0V414M625.5 0V414M701.5 0V414M777.5 0V414M0 54.5H792M0 130.5H792M0 207.5H792M0 283.5H792M0 359.5H792" stroke="#7e838d" stroke-width="1" fill="none" shape-rendering="crispEdges"/><path d="M396 0V7" stroke="#3a9a3a" stroke-width="2"/><path d="M396 207H792" stroke="#a84040" stroke-width="2"/><g fill="none" stroke="#e6e600"><path d="M394 6.5H473.5M397 9.5H471M415.5 7V10M453.5 7V10" stroke-width="1.2"/><path d="M396 7V47M472.5 7V47" stroke-width="2.6"/><path d="M397 46C397 23 414 9 434 9C454 9 472 23 472 47" stroke-width="4"/><rect x="392.5" y="46.5" width="5" height="157" stroke-width="1.6" stroke="#ffff00"/></g><path d="M395.9 46V207.0" stroke="#3a9a3a" stroke-width="1"/><path d="M36.5 348V378.5H66" stroke="#545960" stroke-width="1" fill="none" shape-rendering="crispEdges"/><text x="38.5" y="347.5" font-family="Liberation Sans" font-size="13" fill="#50555c">z</text><text x="68.5" y="378.5" font-family="Liberation Sans" font-size="13" fill="#50555c">y</text></svg>
<div style="position:absolute;left:122px;top:996px;width:78px;height:20px;background:#e9eaee;border:1px solid #c3cbe0;border-top:none;border-radius:0 0 6px 6px;box-sizing:border-box"></div>
<div style="position:absolute;left:132.5px;top:1001px;font:normal 12px/12px 'Liberation Sans',sans-serif;color:#222;white-space:nowrap;transform:scaleX(0.9579);transform-origin:0 0;">Prospettica</div>
<div style="position:absolute;left:206px;top:1001px;font:normal 12px/12px 'Liberation Sans',sans-serif;color:#6d6e76;white-space:nowrap;transform:scaleX(0.9610);transform-origin:0 0;">Superiore</div>
<div style="position:absolute;left:271.4px;top:1001px;font:normal 12px/12px 'Liberation Sans',sans-serif;color:#6d6e76;white-space:nowrap;transform:scaleX(0.9610);transform-origin:0 0;">Davanti</div>
<div style="position:absolute;left:326.5px;top:1001px;font:normal 12px/12px 'Liberation Sans',sans-serif;color:#6d6e76;white-space:nowrap;transform:scaleX(0.9478);transform-origin:0 0;">Destro</div>
<svg style="position:absolute;left:374px;top:1001px;" width="11" height="11" viewBox="0 0 11 11"><path d="M5.5 1v9M1 5.5h9" stroke="#777" stroke-width="3"/><path d="M5.5 2v7M2 5.5h7" stroke="#fff" stroke-width="1"/></svg>
<svg style="position:absolute;left:1902px;top:103px;" width="12" height="12" viewBox="0 0 12 12"><polygon points="11.88,7.17 9.49,8.33 9.33,10.99 6.82,10.12 4.83,11.88 3.67,9.49 1.01,9.33 1.88,6.82 0.12,4.83 2.51,3.67 2.67,1.01 5.18,1.88 7.17,0.12 8.33,2.51 10.99,2.67 10.12,5.18" fill="#c4c4c8"/><circle cx="6" cy="6" r="2" fill="#e9eaee"/></svg>
<svg style="position:absolute;left:12px;top:118px;" width="924" height="28" viewBox="0 0 924 28"><defs>
<linearGradient id="gDoc" x1="0" y1="0" x2="0.3" y2="1"><stop offset="0" stop-color="#fff"/><stop offset="1" stop-color="#c8c8c8"/></linearGradient>
<linearGradient id="gYel" x1="0" y1="0" x2="0" y2="1"><stop offset="0" stop-color="#ffe680"/><stop offset="1" stop-color="#f0b000"/></linearGradient>
<linearGradient id="gGold" x1="0" y1="0" x2="0" y2="1"><stop offset="0" stop-color="#e6d490"/><stop offset="1" stop-color="#b8a050"/></linearGradient>
<radialGradient id="gSph" cx="0.35" cy="0.3" r="0.75"><stop offset="0" stop-color="#fff"/><stop offset="0.6" stop-color="#bbb"/><stop offset="1" stop-color="#555"/></radialGradient>
<radialGradient id="gBlue" cx="0.35" cy="0.3" r="0.75"><stop offset="0" stop-color="#9ab8ff"/><stop offset="0.45" stop-color="#1f3fd0"/><stop offset="1" stop-color="#0a1470"/></radialGradient>
<radialGradient id="gGreen" cx="0.5" cy="0.45" r="0.6"><stop offset="0" stop-color="#a0f070"/><stop offset="0.7" stop-color="#50b030"/><stop offset="1" stop-color="#1a4a10"/></radialGradient>
<radialGradient id="gHelp" cx="0.4" cy="0.3" r="0.75"><stop offset="0" stop-color="#7aa0ff"/><stop offset="1" stop-color="#1c3aa8"/></radialGradient>
<linearGradient id="gBlueF" x1="0" y1="0" x2="1" y2="1"><stop offset="0" stop-color="#b8c8ff"/><stop offset="1" stop-color="#4060e0"/></linearGradient>
<linearGradient id="gGearY" x1="0" y1="0" x2="0" y2="1"><stop offset="0" stop-color="#ffe070"/><stop offset="1" stop-color="#d08010"/></linearGradient>
<linearGradient id="gCone" x1="0" y1="0" x2="1" y2="1"><stop offset="0" stop-color="#ffd060"/><stop offset="1" stop-color="#ff6a00"/></linearGradient>
<linearGradient id="gPyr" x1="0" y1="0" x2="1" y2="0"><stop offset="0" stop-color="#f0d070"/><stop offset="1" stop-color="#c8a040"/></linearGradient>
<linearGradient id="gGray" x1="0" y1="0" x2="1" y2="1"><stop offset="0" stop-color="#f4f4f4"/><stop offset="1" stop-color="#a8a8a8"/></linearGradient>
<linearGradient id="gLock" x1="0" y1="0" x2="0" y2="1"><stop offset="0" stop-color="#fff7a0"/><stop offset="1" stop-color="#e8c020"/></linearGradient>
<radialGradient id="gBlue2" cx="0.35" cy="0.3" r="0.8"><stop offset="0" stop-color="#c8d4ff"/><stop offset="1" stop-color="#3050d0"/></radialGradient></defs><g transform="translate(0,0)"><path d="M6.5 4.5h10l4.5 4.5v15.5h-14.5z" fill="url(#gDoc)" stroke="#000" stroke-width="1.3"/><path d="M16.5 4.5v4.5h4.5" fill="#fff" stroke="#000" stroke-width="1"/></g><g transform="translate(28,0)"><path d="M3.5 10.5h6l2-2h6v3h-14z" fill="#f8d860" stroke="#000" stroke-width="1.2"/><path d="M3.5 22.5l3.5-10h17l-4 10z" fill="url(#gYel)" stroke="#000" stroke-width="1.3"/></g><g transform="translate(56,0)"><path d="M4.5 5.5a1 1 0 0 1 1-1h17.5a1 1 0 0 1 1 1v18h-18.5l-1-1z" fill="url(#gGold)" stroke="#000" stroke-width="1.2"/><rect x="7.5" y="4.5" width="13" height="8" fill="#e4e4e4" stroke="#555" stroke-width="0.8"/><rect x="8.5" y="15.5" width="11" height="8" fill="#a8a8a8" stroke="#444" stroke-width="0.8"/><rect x="10" y="17" width="3" height="5" fill="#7a6a30"/></g><path d="M84 23V28H79z" fill="#666"/><g transform="translate(84,0)"><path d="M8.5 12.5l2-7.5h11l-2 7.5z" fill="#fff" stroke="#000" stroke-width="1.2"/><path d="M5 13.5h18l1 3v6.5h-19z" fill="#d8d8d8" stroke="#000" stroke-width="1.3"/><path d="M5.5 17.5h18M5.5 20.5h18" stroke="#555" stroke-width="1"/><circle cx="15" cy="8.5" r="1.5" fill="#bbb"/></g><g transform="translate(112,0)"><path d="M5.5 6.5h11.5v14l-4 4h-7.5z" fill="url(#gDoc)" stroke="#000" stroke-width="1.3"/><path d="M17 20.5h-4v4" fill="#fff" stroke="#000" stroke-width="1"/><path d="M11.5 8.5l3-4.5 8-1v4.5l-8 .5z" fill="#a8a8a8" stroke="#777" stroke-width="0.8"/><path d="M23 2.5v6" stroke="#000" stroke-width="2.2"/></g><g transform="translate(140,0)"><path d="M8.5 5.5l9 12M19.5 5.5l-9 12" stroke="#000" stroke-width="1.6"/><ellipse cx="9" cy="20.5" rx="2.3" ry="3" fill="none" stroke="#1a2a80" stroke-width="1.3" transform="rotate(25 9 20.5)"/><ellipse cx="19" cy="20.5" rx="2.3" ry="3" fill="none" stroke="#1a2a80" stroke-width="1.3" transform="rotate(-25 19 20.5)"/></g><g transform="translate(168,0)"><path d="M6.5 4.5h7l2.5 2.5v11.5h-9.5z" fill="#fff" stroke="#000" stroke-width="1.2"/><path d="M10.5 9.5h7l3 3v11.5h-10z" fill="url(#gDoc)" stroke="#000" stroke-width="1.2"/></g><g transform="translate(196,0)"><rect x="7.5" y="6.5" width="13" height="17.5" rx="2" fill="#f8d870" stroke="#000" stroke-width="1.3"/><rect x="10.5" y="4.5" width="7" height="3" rx="1" fill="#fff" stroke="#000" stroke-width="1"/></g><g transform="translate(224,0)"><path d="M23.5 14.5c-2-5-9-7-14-2" stroke="#000" stroke-width="3" fill="none"/><path d="M4 16.5l2-8 7 5z" fill="#000"/></g><path d="M252 23V28H247z" fill="#666"/><g transform="translate(252,0)"><path d="M9 24.5C7.5 21.5 5.5 18.5 4.3 15.5C3.8 13.8 5.6 12.8 6.9 14L9 16.2V7.2C9 5.6 11.6 5.6 11.6 7.2V13V4.9C11.6 3.3 14.3 3.3 14.3 4.9V13V5.6C14.3 4 17 4 17 5.6V13.5V8.2C17 6.6 19.7 6.6 19.7 8.2V17.5C19.7 20.5 18.8 22.5 17.8 24.5z" fill="url(#gDoc)" stroke="#000" stroke-width="1.2" stroke-linejoin="round"/><path d="M11.6 13v2M14.3 13v2M17 13.5v2" stroke="#000" stroke-width="0.8"/></g><g transform="translate(280,0)"><ellipse cx="14" cy="14.5" rx="10.5" ry="4" fill="none" stroke="#222" stroke-width="1"/><ellipse cx="14" cy="14" rx="3.5" ry="10.5" fill="none" stroke="#222" stroke-width="1"/><path d="M15.5 6l-2.5 4h5z M8 15.5l4-2.5v5z" fill="#000"/><path d="M15.5 9v7M10 15.5h6" stroke="#000" stroke-width="1.5"/></g><g transform="translate(308,0)"><circle cx="16.5" cy="11.5" r="6" fill="#fff" stroke="#000" stroke-width="1.3"/><path d="M12.3 15.7L7.3 20.7" stroke="#000" stroke-width="2.5"/><path d="M16.5 8v4.5M14.2 10.2h4.6M14.2 14h4.6" stroke="#000" stroke-width="1"/></g><g transform="translate(336,0)"><rect x="12.5" y="4.5" width="12" height="10" fill="none" stroke="#000" stroke-width="1" stroke-dasharray="2 1.5"/><circle cx="11.5" cy="15" r="5.5" fill="#fff" stroke="#000" stroke-width="1.3"/><path d="M7.7 18.9L2.7 23.9" stroke="#000" stroke-width="2.5"/></g><g transform="translate(364,0)"><circle cx="15" cy="12.5" r="5.5" fill="#fff" stroke="#000" stroke-width="1.3"/><path d="M11.2 16.4L6.2 21.4" stroke="#000" stroke-width="2.5"/><path d="M3.5 8V4h4M24.5 8V4h-4M3.5 20v4h4M24.5 20v4h-4" stroke="#000" stroke-width="1.8" fill="none"/></g><g transform="translate(392,0)"><circle cx="14" cy="12.5" r="7" fill="#fff" stroke="#000" stroke-width="1.3"/><path d="M9.1 17.4L4.1 22.4" stroke="#000" stroke-width="2.5"/><circle cx="15.5" cy="10.5" r="3" fill="#f0e020" stroke="#a09000" stroke-width="0.6"/><circle cx="12.5" cy="15" r="2.5" fill="#f0e020" stroke="#a09000" stroke-width="0.6"/></g><g transform="translate(420,0)"><circle cx="14" cy="17" r="4.5" fill="#fff" stroke="#000" stroke-width="1.3"/><path d="M10.8 20.1L5.8 25.1" stroke="#000" stroke-width="2.5"/><path d="M23.5 10c-2.5-5-9-6-13-1.5" stroke="#000" stroke-width="2.6" fill="none"/><path d="M7 13l1.5-7 6 4z" fill="#000"/></g><path d="M448 23V28H443z" fill="#666"/><g transform="translate(448,0)"><rect x="4" y="4.5" width="19.5" height="18.5" fill="#000"/><rect x="6" y="6.5" width="7" height="6.5" fill="#c8c8c8"/><rect x="14.5" y="6.5" width="7" height="6.5" fill="#c8c8c8"/><rect x="6" y="14.5" width="7" height="6.5" fill="#c8c8c8"/><rect x="14.5" y="14.5" width="7" height="6.5" fill="#c8c8c8"/><rect x="14.5" y="6" width="4" height="1" fill="#2040c0"/></g><path d="M476 23V28H471z" fill="#666"/><g transform="translate(476,0)"><path d="M3.5 16l1-3 5-1.5 2.5-3h7l2.5 3.5 2 1 .5 3h-20z" fill="#e01010" stroke="#900" stroke-width="0.6"/><path d="M13.5 9.3h5l1.5 2.5h-7z" fill="#fff"/><circle cx="8" cy="16.5" r="2" fill="#222"/><circle cx="19.5" cy="16.5" r="2" fill="#222"/><path d="M3 19.5h22" stroke="#888" stroke-width="0.8"/></g><path d="M504 23V28H499z" fill="#666"/><g transform="translate(504,0)"><path d="M3.5 17.5l6-7 15 3-5 10z" fill="none" stroke="#888" stroke-width="0.8"/><path d="M6.5 14l15 3M8.5 12l14 2.8M5 16l14.5 3.5M13 11l-5 10M17 12l-4.5 9.5M21 13l-3.8 9" stroke="#999" stroke-width="0.7"/><path d="M13 16l1.5-5" stroke="#20a020" stroke-width="1.3"/><path d="M13 16l7.5 2" stroke="#e02020" stroke-width="1.3"/><rect x="11" y="14" width="3.5" height="3.5" fill="#fff" stroke="#000" stroke-width="1"/></g><path d="M532 23V28H527z" fill="#666"/><g transform="translate(532,0)"><circle cx="13.5" cy="14" r="9" fill="none" stroke="#555" stroke-width="1"/><rect x="10.5" y="12" width="4" height="3.5" fill="#fff" stroke="#000" stroke-width="1.1"/><path d="M14.5 14h9" stroke="#000" stroke-width="1.1"/></g><path d="M560 23V28H555z" fill="#666"/><g transform="translate(560,0)"><circle cx="11" cy="10.5" r="3" fill="#f8e000" stroke="#c08000" stroke-width="0.9"/><rect x="15.5" y="10" width="6" height="5.5" fill="#f8e000" stroke="#c08000" stroke-width="0.9"/><path d="M16.5 17.5l-3.2 5.5h6.4z" fill="none" stroke="#c07010" stroke-width="1"/><path d="M22.5 3.5h3v3M3.5 21.5v3h3" stroke="#000" stroke-width="1" fill="none"/></g><path d="M588 23V28H583z" fill="#666"/><g transform="translate(588,0)"><path d="M14 4.5c-4 0-6 2.8-6 5.8 0 3 2.8 5 3 8v2.5c0 1.5 1.2 2.3 3 2.3s3-.8 3-2.3v-2.5c.2-3 3-5 3-8 0-3-2-5.8-6-5.8z" fill="url(#gGray)" stroke="#666" stroke-width="1"/></g><path d="M616 23V28H611z" fill="#666"/><g transform="translate(616,0)"><path d="M11 12.5v-3.5a3 3 0 0 1 6 0v3.5" stroke="#000" stroke-width="2" fill="none"/><rect x="8.5" y="12" width="11" height="9.5" rx="1" fill="#d0d0d0" stroke="#000" stroke-width="1.2"/><path d="M10.5 15h7M10.5 17.5h7" stroke="#888" stroke-width="1"/></g><path d="M644 23V28H639z" fill="#666"/><g transform="translate(644,0)"><path d="M5.5 7l13 2.5 4.5 2v10l-6.5 2.5-11-12.5z" fill="#2030a0" stroke="#000" stroke-width="1"/><path d="M5.5 7l13 2.5 4.5 2-6.5 3z" fill="#ff8050"/><path d="M5.5 8.5l11 6.5v3l-9-6z" fill="#fff"/><path d="M16.5 14.5l6.5-3v3l-6.5 3z" fill="#e02020"/><path d="M16.5 17.5l6.5-3v3l-6.5 3z" fill="#d0d0d0"/></g><path d="M672 23V28H667z" fill="#666"/><g transform="translate(672,0)"><path d="M14.00 6.00A8 8 0 0 1 16.22 6.32" stroke="#ff0000" stroke-width="4.6" fill="none"/><path d="M16.07 6.27A8 8 0 0 1 18.14 7.15" stroke="#ff3f00" stroke-width="4.6" fill="none"/><path d="M18.00 7.07A8 8 0 0 1 19.77 8.46" stroke="#ff7f00" stroke-width="4.6" fill="none"/><path d="M19.66 8.34A8 8 0 0 1 21.01 10.14" stroke="#ffbf00" stroke-width="4.6" fill="none"/><path d="M20.93 10.00A8 8 0 0 1 21.77 12.08" stroke="#ffff00" stroke-width="4.6" fill="none"/><path d="M21.73 11.93A8 8 0 0 1 22.00 14.16" stroke="#bfff00" stroke-width="4.6" fill="none"/><path d="M22.00 14.00A8 8 0 0 1 21.68 16.22" stroke="#7fff00" stroke-width="4.6" fill="none"/><path d="M21.73 16.07A8 8 0 0 1 20.85 18.14" stroke="#3fff00" stroke-width="4.6" fill="none"/><path d="M20.93 18.00A8 8 0 0 1 19.54 19.77" stroke="#00ff00" stroke-width="4.6" fill="none"/><path d="M19.66 19.66A8 8 0 0 1 17.86 21.01" stroke="#00ff3f" stroke-width="4.6" fill="none"/><path d="M18.00 20.93A8 8 0 0 1 15.92 21.77" stroke="#00ff7f" stroke-width="4.6" fill="none"/><path d="M16.07 21.73A8 8 0 0 1 13.84 22.00" stroke="#00ffbf" stroke-width="4.6" fill="none"/><path d="M14.00 22.00A8 8 0 0 1 11.78 21.68" stroke="#00ffff" stroke-width="4.6" fill="none"/><path d="M11.93 21.73A8 8 0 0 1 9.86 20.85" stroke="#00bfff" stroke-width="4.6" fill="none"/><path d="M10.00 20.93A8 8 0 0 1 8.23 19.54" stroke="#007fff" stroke-width="4.6" fill="none"/><path d="M8.34 19.66A8 8 0 0 1 6.99 17.86" stroke="#003fff" stroke-width="4.6" fill="none"/><path d="M7.07 18.00A8 8 0 0 1 6.23 15.92" stroke="#0000ff" stroke-width="4.6" fill="none"/><path d="M6.27 16.07A8 8 0 0 1 6.00 13.84" stroke="#3f00ff" stroke-width="4.6" fill="none"/><path d="M6.00 14.00A8 8 0 0 1 6.32 11.78" stroke="#7f00ff" stroke-width="4.6" fill="none"/><path d="M6.27 11.93A8 8 0 0 1 7.15 9.86" stroke="#bf00ff" stroke-width="4.6" fill="none"/><path d="M7.07 10.00A8 8 0 0 1 8.46 8.23" stroke="#ff00ff" stroke-width="4.6" fill="none"/><path d="M8.34 8.34A8 8 0 0 1 10.14 6.99" stroke="#ff00bf" stroke-width="4.6" fill="none"/><path d="M10.00 7.07A8 8 0 0 1 12.08 6.23" stroke="#ff007f" stroke-width="4.6" fill="none"/><path d="M11.93 6.27A8 8 0 0 1 14.16 6.00" stroke="#ff003f" stroke-width="4.6" fill="none"/><circle cx="14" cy="14" r="10.3" fill="none" stroke="#000" stroke-width="0.9"/><circle cx="14" cy="14" r="5.7" fill="#fff" stroke="#000" stroke-width="0.7"/><defs><linearGradient id="cw" x1="0" y1="0" x2="1" y2="1"><stop offset="0" stop-color="#ff2020"/><stop offset="0.25" stop-color="#ffe000"/><stop offset="0.5" stop-color="#20e040"/><stop offset="0.75" stop-color="#20c0ff"/><stop offset="1" stop-color="#a020ff"/></linearGradient></defs></g><path d="M700 23V28H695z" fill="#666"/><g transform="translate(700,0)"><circle cx="14" cy="14" r="8.8" fill="url(#gSph)" stroke="#000" stroke-width="1.2"/><path d="M5.5 13c3 1.5 13 1.5 17 0M13 5.3c-2 3-2 14 0 17.5" stroke="#000" stroke-width="1.2" fill="none"/></g><g transform="translate(728,0)"><path d="M2.5 2V26" stroke="#888" stroke-width="1"/><path d="M6.5 2V26" stroke="#888" stroke-width="1"/><path d="M10.5 2V26" stroke="#888" stroke-width="1"/><path d="M14.5 2V26" stroke="#888" stroke-width="1"/><path d="M18.5 2V26" stroke="#888" stroke-width="1"/><path d="M22.5 2V26" stroke="#888" stroke-width="1"/><path d="M25.5 2V26" stroke="#888" stroke-width="1"/><path d="M2 2.5H26" stroke="#888" stroke-width="1"/><path d="M2 6.5H26" stroke="#888" stroke-width="1"/><path d="M2 10.5H26" stroke="#888" stroke-width="1"/><path d="M2 14.5H26" stroke="#888" stroke-width="1"/><path d="M2 18.5H26" stroke="#888" stroke-width="1"/><path d="M2 22.5H26" stroke="#888" stroke-width="1"/><path d="M2 25.5H26" stroke="#888" stroke-width="1"/><circle cx="14" cy="14" r="8.8" fill="url(#gSph)" stroke="#000" stroke-width="1.2"/><path d="M5.5 13c3 1.5 13 1.5 17 0M13 5.3c-2 3-2 14 0 17.5" stroke="#000" stroke-width="1.2" fill="none"/></g><path d="M756 23V28H751z" fill="#666"/><g transform="translate(756,0)"><ellipse cx="14" cy="21" rx="9" ry="3" fill="#000" opacity="0.35"/><circle cx="13.5" cy="13.5" r="9" fill="url(#gBlue)"/><ellipse cx="10.5" cy="9.5" rx="2.5" ry="1.8" fill="#fff" opacity="0.8" transform="rotate(-30 10.5 9.5)"/></g><path d="M784 23V28H779z" fill="#666"/><g transform="translate(784,0)"><defs><radialGradient id="gGlow" cx="0.5" cy="0.5" r="0.5"><stop offset="0" stop-color="#fff" stop-opacity="0.9"/><stop offset="1" stop-color="#fff" stop-opacity="0"/></radialGradient></defs><ellipse cx="11" cy="15" rx="10" ry="9" fill="url(#gGlow)"/><path d="M12.3 8L24.9 3.2 21.8 15.3z" fill="url(#gCone)" stroke="#5a3000" stroke-width="0.9" stroke-linejoin="round"/><path d="M12.8 8.2l8.5 6.5" stroke="#fff6d0" stroke-width="1.6"/></g><path d="M812 23V28H807z" fill="#666"/><g transform="translate(812,0)"><polygon points="24.5,14.0 20.9,16.4 21.4,20.3 16.9,19.9 14.0,22.9 11.1,19.9 6.6,20.3 7.1,16.4 3.5,14.0 7.1,11.6 6.6,7.7 11.1,8.1 14.0,5.1 16.9,8.1 21.4,7.7 20.9,11.6" fill="url(#gGearY)" stroke="#6a4a00" stroke-width="1" stroke-linejoin="round"/><rect x="11" y="9" width="6" height="9" rx="2.5" fill="#888" stroke="#333" stroke-width="0.8"/></g><path d="M840 23V28H835z" fill="#666"/><g transform="translate(840,0)"><path d="M4 4.5h15M4 16.5h15M7 6v9" stroke="#000" stroke-width="1"/><path d="M7 5.5l-1.5 2.5h3zM7 15.5l-1.5-2.5h3z" fill="#000"/><rect x="19" y="3" width="3.5" height="3.5" fill="#fff" stroke="#000" stroke-width="1"/><rect x="19" y="15" width="3.5" height="3.5" fill="#fff" stroke="#000" stroke-width="1"/><path d="M20.5 18.5V25M11.5 18.5V25M12 23h8" stroke="#000" stroke-width="1"/><path d="M12.5 23l2.5-1.5v3zM19.5 23l-2.5-1.5v3z" fill="#000"/><rect x="10" y="15" width="3.5" height="3.5" fill="#fff" stroke="#000" stroke-width="1"/></g><path d="M868 23V28H863z" fill="#666"/><g transform="translate(868,0)"><circle cx="14" cy="14" r="10.5" fill="url(#gGreen)" stroke="#000" stroke-width="1.3"/><path d="M9 12c2 2 3 5 1 8M6 19c3-1 6 1 7 3M13 5c1 4 0 7-3 9M13 13l10-5" stroke="#000" stroke-width="1.2" fill="none"/><path d="M6 16c2 0 4 1 5 3l-2 3c-2-1-3-3-3-6z" fill="#000"/></g><path d="M896 23V28H891z" fill="#666"/><g transform="translate(896,0)"><circle cx="14" cy="14" r="10" fill="url(#gHelp)"/><path d="M10.5 10.5c0-2.5 1.8-3.8 3.7-3.8 2.2 0 3.8 1.3 3.8 3.3 0 2.5-3 3-3 5.5" stroke="#fff" stroke-width="2.4" fill="none"/><circle cx="15" cy="19.5" r="1.6" fill="#fff"/></g><path d="M924 23V28H919z" fill="#666"/></svg>
<svg style="position:absolute;left:2px;top:164px;" width="112" height="280" viewBox="0 0 112 280"><g transform="translate(0,0)"><path d="M9.5 5.5v15l3.5-3.5 3 5.5 2.5-1.2-3-5.3h5z" fill="#fff" stroke="#000" stroke-width="1.1" stroke-linejoin="round"/></g><g transform="translate(28,0)"><circle cx="13.5" cy="13.5" r="2" fill="#fff" stroke="#000" stroke-width="1"/></g><path d="M56 23V28H51z" fill="#666"/><g transform="translate(56,0)"><path d="M7 21L12 8 21 18" stroke="#000" stroke-width="1.1" fill="none"/><rect x="5.25" y="19.25" width="3.5" height="3.5" fill="#fff" stroke="#000" stroke-width="1"/><rect x="10.25" y="6.25" width="3.5" height="3.5" fill="#fff" stroke="#000" stroke-width="1"/><rect x="19.25" y="16.25" width="3.5" height="3.5" fill="#fff" stroke="#000" stroke-width="1"/></g><path d="M84 23V28H79z" fill="#666"/><g transform="translate(84,0)"><path d="M6 8C22 5 24 24 6 20" stroke="#000" stroke-width="1.1" fill="none"/><rect x="4.25" y="6.25" width="3.5" height="3.5" fill="#fff" stroke="#000" stroke-width="1"/><rect x="18.25" y="2.75" width="3.5" height="3.5" fill="#fff" stroke="#000" stroke-width="1"/><rect x="4.25" y="18.25" width="3.5" height="3.5" fill="#fff" stroke="#000" stroke-width="1"/><rect x="20.25" y="20.25" width="3.5" height="3.5" fill="#fff" stroke="#000" stroke-width="1"/></g><path d="M112 23V28H107z" fill="#666"/><g transform="translate(0,28)"><circle cx="13.5" cy="13" r="9.3" fill="none" stroke="#000" stroke-width="1.1"/><path d="M14 13l6-6" stroke="#000" stroke-width="0.9"/><rect x="12.25" y="11.25" width="3.5" height="3.5" fill="#fff" stroke="#000" stroke-width="1"/><rect x="18.25" y="5.25" width="3.5" height="3.5" fill="#fff" stroke="#000" stroke-width="1"/></g><path d="M28 51V56H23z" fill="#666"/><g transform="translate(28,28)"><ellipse cx="14" cy="14" rx="9.5" ry="6.5" fill="none" stroke="#000" stroke-width="1.1"/><path d="M14 8v7.5h9" stroke="#000" stroke-width="0.9" fill="none"/><rect x="12.25" y="6.25" width="3.5" height="3.5" fill="#fff" stroke="#000" stroke-width="1"/><rect x="12.25" y="13.75" width="3.5" height="3.5" fill="#fff" stroke="#000" stroke-width="1"/><rect x="21.25" y="13.75" width="3.5" height="3.5" fill="#fff" stroke="#000" stroke-width="1"/></g><path d="M56 51V56H51z" fill="#666"/><g transform="translate(56,28)"><path d="M7 6c7 1 12 4 14 8L7 22z" stroke="#000" stroke-width="0.9" fill="none"/><path d="M7 6c7 1 12 4 14 8" stroke="#000" stroke-width="1.2" fill="none"/><rect x="5.25" y="4.25" width="3.5" height="3.5" fill="#fff" stroke="#000" stroke-width="1"/><rect x="19.25" y="12.25" width="3.5" height="3.5" fill="#fff" stroke="#000" stroke-width="1"/><rect x="5.25" y="20.25" width="3.5" height="3.5" fill="#fff" stroke="#000" stroke-width="1"/></g><path d="M84 51V56H79z" fill="#666"/><g transform="translate(84,28)"><rect x="6" y="9" width="16" height="10" fill="none" stroke="#000" stroke-width="1.3"/><rect x="20.25" y="7.25" width="3.5" height="3.5" fill="#fff" stroke="#000" stroke-width="1"/><rect x="4.25" y="17.25" width="3.5" height="3.5" fill="#fff" stroke="#000" stroke-width="1"/></g><path d="M112 51V56H107z" fill="#666"/><g transform="translate(0,56)"><path d="M5 13l4.5-7.5h9l4.5 7.5-4.5 7.5h-9z" fill="none" stroke="#000" stroke-width="1"/><path d="M14 13h7" stroke="#000" stroke-width="0.8"/><rect x="12.25" y="11.25" width="3.5" height="3.5" fill="#fff" stroke="#000" stroke-width="1"/><rect x="20.25" y="11.25" width="3.5" height="3.5" fill="#fff" stroke="#000" stroke-width="1"/></g><path d="M28 79V84H23z" fill="#666"/><g transform="translate(28,56)"><path d="M6 6h12v15" stroke="#999" stroke-width="0.7" fill="none"/><path d="M6 6h8c5 0 8 4 8 9v6.5" stroke="#000" stroke-width="1.8" fill="none"/><rect x="4.25" y="4.25" width="3.5" height="3.5" fill="#fff" stroke="#000" stroke-width="1"/><rect x="20.25" y="19.75" width="3.5" height="3.5" fill="#fff" stroke="#000" stroke-width="1"/></g><path d="M56 79V84H51z" fill="#666"/><g transform="translate(56,56)"><path d="M10 6L22 6 17 21.5 5.5 17z" fill="url(#gBlueF)" stroke="#000" stroke-width="1"/><path d="M16 6l-5.5 13.3M8 11.5l12 2" stroke="#1a2a80" stroke-width="0.8"/><rect x="8.25" y="4.25" width="3.5" height="3.5" fill="#fff" stroke="#000" stroke-width="1"/><rect x="20.25" y="4.25" width="3.5" height="3.5" fill="#fff" stroke="#000" stroke-width="1"/><rect x="3.75" y="15.25" width="3.5" height="3.5" fill="#fff" stroke="#000" stroke-width="1"/><rect x="15.25" y="19.75" width="3.5" height="3.5" fill="#fff" stroke="#000" stroke-width="1"/></g><path d="M84 79V84H79z" fill="#666"/><g transform="translate(84,56)"><path d="M5 9.5l7-5c6 1 9 4 9 9v7l-4.5 4v-7c0-3-2-5-4-5.5z" fill="url(#gBlueF)" stroke="#000" stroke-width="1.1"/><path d="M5 9.5l7 3.5 0.5-8.5" fill="#fff" stroke="#000" stroke-width="0.9"/><path d="M16.5 17.5l4.5-3v6l-4.5 4z" fill="#fff" stroke="#000" stroke-width="0.9"/></g><path d="M112 79V84H107z" fill="#666"/><g transform="translate(0,84)"><path d="M5 10l8-4 9 3v10l-8 5-9-3z" fill="#5878e8" stroke="#000" stroke-width="1.1"/><path d="M5 10l9 3 8-4-9-3z" fill="#aab8ff" stroke="#000" stroke-width="0.9"/><path d="M14 13v11" stroke="#000" stroke-width="0.9"/></g><path d="M28 107V112H23z" fill="#666"/><g transform="translate(28,84)"><circle cx="18" cy="9.5" r="6.5" fill="url(#gBlue2)" stroke="#000" stroke-width="1.1"/><circle cx="10" cy="18" r="6.5" fill="url(#gBlue2)" stroke="#000" stroke-width="1.1"/><path d="M11.5 9c3 1 9 1 12.5 0M4 17.5c3 1 9 1 12 0M18 3.5c-2 3-2 9 0 12M10 11.5c-2 3-2 9 0 12" stroke="#223" stroke-width="0.6" fill="none"/></g><path d="M56 107V112H51z" fill="#666"/><g transform="translate(56,84)"><ellipse cx="14" cy="6.5" rx="6" ry="2.3" fill="none" stroke="#000" stroke-width="1"/><path d="M3.5 12.5c6 3 15 3 21 0v9c-6 3-15 3-21 0z" fill="#5878e8" stroke="#000" stroke-width="1.1"/><ellipse cx="14" cy="19.5" rx="5" ry="2.2" fill="none" stroke="#fff" stroke-width="1.6"/></g><path d="M84 107V112H79z" fill="#666"/><g transform="translate(84,84)"><path d="M4 21l6.5-10 2-5.5 11 4-3 6-4 7.5c-4-1-8-1-12.5-2z" fill="url(#gBlueF)" stroke="#000" stroke-width="1.1"/><path d="M8 14l13 5M11 9l11 4M9 21l6-12M14 22l5-11" stroke="#1a2a80" stroke-width="0.7"/></g><path d="M112 107V112H107z" fill="#666"/><g transform="translate(0,112)"><path d="M4 8.5l3-1.5c-1-2 1-3.5 2.5-2l1.5-1 2.5 2c1.5-1 3 .5 2 2l2 2-3 3-1.5-1c-1 1.5-3 .5-2.5-1.5l-2.5 1.5z" fill="#f8b020" stroke="#a06000" stroke-width="0.8"/><path d="M11 13.5l3-2 1.5 1.5c1.5-1 3 .5 2 2l3 2.5-1.5 2 1.5 1.5c-1 2-3 1-3 0l-2 2-3-2.5 1-1.5c-1.5-.5-1.5-2.5 0-3z" fill="#fff" stroke="#000" stroke-width="1"/></g><path d="M28 135V140H23z" fill="#666"/><g transform="translate(28,112)"><path d="M4.5 21.5l2-15 4 8 8.5-8.5-5 10 10 .5-6.5 3 4.5 2z" fill="url(#gCone)" stroke="#000" stroke-width="1.1" stroke-linejoin="round"/></g><g transform="translate(56,112)"><rect x="2.5" y="10.5" width="10" height="5" fill="#fff" stroke="#000" stroke-width="1"/><path d="M13 3.5h5l-5 12z" fill="#102080"/><path d="M14 16l3.5-3.5 3.5 3.5-3.5 3.5z" fill="#fff" stroke="#000" stroke-width="1"/></g><g transform="translate(84,112)"><rect x="2.5" y="12.5" width="18.5" height="5" fill="#fff" stroke="#000" stroke-width="1"/><path d="M13 5h5l-5 12.5z" fill="#102080"/></g><g transform="translate(0,140)"><circle cx="14" cy="8.5" r="5.5" fill="#5878e8" stroke="#000" stroke-width="2"/><circle cx="9.5" cy="16.5" r="5" fill="#fff" stroke="#000" stroke-width="2"/><circle cx="18.5" cy="16.5" r="5" fill="#1a2a80" stroke="#000" stroke-width="2"/></g><path d="M28 163V168H23z" fill="#666"/><g transform="translate(28,140)"><circle cx="14" cy="9" r="3.8" fill="#5878e8" stroke="#000" stroke-width="0.8"/><circle cx="9" cy="17.5" r="3.8" fill="#fff" stroke="#000" stroke-width="1"/><circle cx="19" cy="17.5" r="3.8" fill="#1a2a80" stroke="#000" stroke-width="0.8"/></g><g transform="translate(56,140)"><path d="M3 11c3-2 6-3 8-2.5 5 1 8 6 8.5 12.5" stroke="#000" stroke-width="1.4" fill="none"/><rect x="7.25" y="8.25" width="3.5" height="3.5" fill="#fff" stroke="#000" stroke-width="1"/><rect x="17.25" y="17.25" width="3.5" height="3.5" fill="#fff" stroke="#000" stroke-width="1"/></g><g transform="translate(84,140)"><path d="M3.5 10c3-2 10-2 13 2 2 3 3 7 3 10" stroke="#000" stroke-width="1.6" fill="none"/><path d="M3 6.5h6M14.5 8.5c4 2 6 6 6.5 14" stroke="#000" stroke-width="0.9" stroke-dasharray="1.3 1.3" fill="none"/><rect x="8.75" y="4.25" width="3.5" height="3.5" fill="#fff" stroke="#000" stroke-width="1"/><rect x="21.25" y="10.75" width="3.5" height="3.5" fill="#fff" stroke="#000" stroke-width="1"/></g><path d="M112 163V168H107z" fill="#666"/><g transform="translate(0,168)"><path d="M5.5 4.5h15.5l.5 5-2 .2-1.5-2.2h-3.5v13.5l3 1.5v1.5h-9v-1.5l3-1.5v-13.5h-3.5l-1.5 2.2-2-.2z" fill="#6888f0" stroke="#000" stroke-width="1"/></g><g transform="translate(28,168)"><rect x="5.5" y="15.5" width="6" height="6" fill="#f4f4f4" stroke="#000" stroke-width="1"/><rect x="17" y="5" width="6" height="6" fill="#7a98ff" stroke="#000" stroke-width="0.8"/><path d="M11.5 15.5l5-5" stroke="#000" stroke-width="0.9"/><path d="M17 10l-3 .5 2.5 2.5z" fill="#000"/></g><path d="M56 191V196H51z" fill="#666"/><g transform="translate(56,168)"><rect x="5.5" y="5" width="5.5" height="5.5" fill="#7a98ff" stroke="#000" stroke-width="0.8"/><rect x="13.5" y="7.5" width="5.5" height="5.5" fill="#7a98ff" stroke="#000" stroke-width="0.8"/><rect x="10.5" y="10.5" width="5.5" height="5.5" fill="#7a98ff" stroke="#000" stroke-width="0.8"/><rect x="5.5" y="16.5" width="5.5" height="5.5" fill="#f4f4f4" stroke="#000" stroke-width="0.8"/><rect x="13.5" y="17.5" width="5.5" height="5.5" fill="#7a98ff" stroke="#000" stroke-width="0.8"/></g><g transform="translate(84,168)"><rect x="3.5" y="5" width="5" height="13" fill="url(#gGray)" stroke="#000" stroke-width="1"/><path d="M9 6c4-1 8 0 10 3" stroke="#000" stroke-width="0.8" fill="none"/><path d="M12 19l10-8 3 3-10 8z" fill="#7a98ff" stroke="#000" stroke-width="0.9"/></g><g transform="translate(0,196)"><path d="M5 9l8-4 9 3v10l-8 5-9-3z" fill="#5878e8" stroke="#000" stroke-width="1.1"/><path d="M5 9l9 3 8-4-9-3z" fill="#b0c0ff" stroke="#000" stroke-width="0.8"/><path d="M10 17l4 1.5 4-2v5l-4 2-4-1.5z" fill="#fff" stroke="#000" stroke-width="0.8"/></g><path d="M28 219V224H23z" fill="#666"/><g transform="translate(28,196)"><path d="M3 20.5l5-4h17l-5 4z" fill="#6888f0" stroke="#000" stroke-width="0.7"/><path d="M8 18V6M14 18V6M20 18V6" stroke="#999" stroke-width="1.6"/><path d="M8 4l-2 3h4zM14 4l-2 3h4zM20 4l-2 3h4z" fill="#999"/></g><path d="M56 219V224H51z" fill="#666"/><g transform="translate(56,196)"><rect x="4.5" y="5.0" width="4.5" height="4.5" fill="#6a8af8" stroke="#000" stroke-width="1"/><rect x="11.5" y="5.0" width="4.5" height="4.5" fill="#6a8af8" stroke="#000" stroke-width="1"/><rect x="18.5" y="5.0" width="4.5" height="4.5" fill="#6a8af8" stroke="#000" stroke-width="1"/><rect x="4.5" y="11.5" width="4.5" height="4.5" fill="#6a8af8" stroke="#000" stroke-width="1"/><rect x="11.5" y="11.5" width="4.5" height="4.5" fill="#6a8af8" stroke="#000" stroke-width="1"/><rect x="18.5" y="11.5" width="4.5" height="4.5" fill="#6a8af8" stroke="#000" stroke-width="1"/><rect x="4.5" y="18.0" width="4.5" height="4.5" fill="#fff" stroke="#000" stroke-width="1"/><rect x="11.5" y="18.0" width="4.5" height="4.5" fill="#6a8af8" stroke="#000" stroke-width="1"/><rect x="18.5" y="18.0" width="4.5" height="4.5" fill="#6a8af8" stroke="#000" stroke-width="1"/></g><path d="M84 219V224H79z" fill="#666"/><g transform="translate(84,196)"><rect x="9.5" y="3.5" width="8.5" height="4" fill="#fff" stroke="#000" stroke-width="1"/><rect x="10.5" y="11.5" width="6.5" height="4" fill="#fff" stroke="#000" stroke-width="1"/><rect x="10.5" y="17" width="6.5" height="4" fill="#fff" stroke="#000" stroke-width="1"/><path d="M13.8 2v20.5" stroke="#d01010" stroke-width="1.2"/></g><path d="M112 219V224H107z" fill="#666"/><g transform="translate(0,224)"><path d="M5 5l6-2 2 2v14.5l-6 2.5-2-3z" fill="#fff" stroke="#000" stroke-width="0.9"/><path d="M10 22l5-14 6 2-5 15z" fill="#4c6ef0" stroke="#000" stroke-width="1"/><path d="M15 8l2-3 6 2-2 3z" fill="#fff" stroke="#000" stroke-width="0.8"/></g><path d="M28 247V252H23z" fill="#666"/><g transform="translate(28,224)"><rect x="12.5" y="3.5" width="4" height="19" fill="#7a98ff" stroke="#000" stroke-width="1"/><circle cx="5" cy="9" r="2" fill="#000"/><circle cx="23" cy="9" r="2" fill="#000"/><path d="M3 10l3 1 6-1M6 11l1 6 6 0M16 10l6 2 3 4-2 3 4 4" stroke="#000" stroke-width="1.2" fill="none"/></g><path d="M56 247V252H51z" fill="#666"/><g transform="translate(56,224)"><path d="M6 14.5l4 6.5c3-6 7-11 12-16" stroke="#000" stroke-width="3" fill="none" stroke-linejoin="round"/></g><path d="M84 247V252H79z" fill="#666"/><g transform="translate(84,224)"><path d="M3.5 8.5l4-3 7 1.5v9.5l-3.5 3-7.5-2z" fill="#e0e0e0" stroke="#000" stroke-width="0.9"/><path d="M3.5 8.5l7.5 1.5 3.5-3-7-1.5z" fill="#fff" stroke="#000" stroke-width="0.7"/><path d="M17 7.5l5.5 11c0 2-5 3-8 2z" fill="url(#gGray)" stroke="#000" stroke-width="0.9"/></g><path d="M112 247V252H107z" fill="#666"/><g transform="translate(0,252)"><path d="M5 18l8-7 8 6-8 5z" fill="url(#gPyr)" stroke="#000" stroke-width="1"/><path d="M13 11v11" stroke="#a07820" stroke-width="0.8"/><path d="M8 8l4-3h7l2 2.5-2 2.5h-8z" fill="#fff" stroke="#555" stroke-width="0.8"/><path d="M21 4v6" stroke="#000" stroke-width="2"/></g><path d="M28 275V280H23z" fill="#666"/></svg>
<svg style="position:absolute;left:103px;top:590px;" width="12" height="12" viewBox="0 0 12 12"><polygon points="11.88,7.17 9.49,8.33 9.33,10.99 6.82,10.12 4.83,11.88 3.67,9.49 1.01,9.33 1.88,6.82 0.12,4.83 2.51,3.67 2.67,1.01 5.18,1.88 7.17,0.12 8.33,2.51 10.99,2.67 10.12,5.18" fill="#b8b8bc"/><circle cx="6" cy="6" r="2" fill="#e9eaee"/></svg>
<svg style="position:absolute;left:10px;top:606px;" width="60" height="20" viewBox="0 0 60 20"><circle cx="9" cy="10.5" r="6.5" fill="none" stroke="#333" stroke-width="0.9"/><rect x="7" y="9" width="3" height="3" fill="#fff" stroke="#000" stroke-width="0.9"/><path d="M10 10.5h8" stroke="#000" stroke-width="1"/><path d="M40 4.5h11l-4 5v6.5l-3 1v-7.5z" fill="#c8c8c8" stroke="#333" stroke-width="1"/><path d="M51 3l2 0v2M39 17l-1 0v-2" stroke="#333" stroke-width="1" fill="none"/></svg>
<div style="position:absolute;left:5px;top:631px;width:14px;height:13px;background:#fff;border:1px solid #b9c2d6;box-sizing:border-box"></div>
<svg style="position:absolute;left:6px;top:632px;" width="12" height="11" viewBox="0 0 12 11"><path d="M2 5.5l3 3.5 5-7.5" stroke="#222" stroke-width="1.8" fill="none"/></svg>
<div style="position:absolute;left:24.3px;top:632px;font:normal 12px/12px 'Liberation Sans',sans-serif;color:#000;white-space:nowrap;transform:scaleX(0.9253);transform-origin:0 0;">Fine</div>
<div style="position:absolute;left:5px;top:647px;width:14px;height:13px;background:#fff;border:1px solid #b9c2d6;box-sizing:border-box"></div>
<svg style="position:absolute;left:6px;top:648px;" width="12" height="11" viewBox="0 0 12 11"><path d="M2 5.5l3 3.5 5-7.5" stroke="#222" stroke-width="1.8" fill="none"/></svg>
<div style="position:absolute;left:24.3px;top:648px;font:normal 12px/12px 'Liberation Sans',sans-serif;color:#000;white-space:nowrap;transform:scaleX(0.9856);transform-origin:0 0;">Vicino</div>
<div style="position:absolute;left:5px;top:663px;width:14px;height:13px;background:#fff;border:1px solid #b9c2d6;box-sizing:border-box"></div>
<svg style="position:absolute;left:6px;top:664px;" width="12" height="11" viewBox="0 0 12 11"><path d="M2 5.5l3 3.5 5-7.5" stroke="#222" stroke-width="1.8" fill="none"/></svg>
<div style="position:absolute;left:24.3px;top:664px;font:normal 12px/12px 'Liberation Sans',sans-serif;color:#000;white-space:nowrap;transform:scaleX(0.9790);transform-origin:0 0;">Punto</div>
<div style="position:absolute;left:5px;top:679px;width:14px;height:13px;background:#fff;border:1px solid #b9c2d6;box-sizing:border-box"></div>
<svg style="position:absolute;left:6px;top:680px;" width="12" height="11" viewBox="0 0 12 11"><path d="M2 5.5l3 3.5 5-7.5" stroke="#222" stroke-width="1.8" fill="none"/></svg>
<div style="position:absolute;left:24.3px;top:680px;font:normal 12px/12px 'Liberation Sans',sans-serif;color:#000;white-space:nowrap;transform:scaleX(1.0097);transform-origin:0 0;">Medio</div>
<div style="position:absolute;left:5px;top:695px;width:14px;height:13px;background:#fff;border:1px solid #b9c2d6;box-sizing:border-box"></div>
<svg style="position:absolute;left:6px;top:696px;" width="12" height="11" viewBox="0 0 12 11"><path d="M2 5.5l3 3.5 5-7.5" stroke="#222" stroke-width="1.8" fill="none"/></svg>
<div style="position:absolute;left:24.3px;top:696px;font:normal 12px/12px 'Liberation Sans',sans-serif;color:#000;white-space:nowrap;transform:scaleX(0.9131);transform-origin:0 0;">Cen</div>
<div style="position:absolute;left:5px;top:711px;width:14px;height:13px;background:#fff;border:1px solid #b9c2d6;box-sizing:border-box"></div>
<svg style="position:absolute;left:6px;top:712px;" width="12" height="11" viewBox="0 0 12 11"><path d="M2 5.5l3 3.5 5-7.5" stroke="#222" stroke-width="1.8" fill="none"/></svg>
<div style="position:absolute;left:24.3px;top:712px;font:normal 12px/12px 'Liberation Sans',sans-serif;color:#000;white-space:nowrap;transform:scaleX(1.0194);transform-origin:0 0;">Int</div>
<div style="position:absolute;left:5px;top:727px;width:14px;height:13px;background:#fff;border:1px solid #b9c2d6;box-sizing:border-box"></div>
<svg style="position:absolute;left:6px;top:728px;" width="12" height="11" viewBox="0 0 12 11"><path d="M2 5.5l3 3.5 5-7.5" stroke="#222" stroke-width="1.8" fill="none"/></svg>
<div style="position:absolute;left:24.3px;top:728px;font:normal 12px/12px 'Liberation Sans',sans-serif;color:#000;white-space:nowrap;transform:scaleX(0.9271);transform-origin:0 0;">Perp</div>
<div style="position:absolute;left:5px;top:743px;width:14px;height:13px;background:#fff;border:1px solid #b9c2d6;box-sizing:border-box"></div>
<svg style="position:absolute;left:6px;top:744px;" width="12" height="11" viewBox="0 0 12 11"><path d="M2 5.5l3 3.5 5-7.5" stroke="#222" stroke-width="1.8" fill="none"/></svg>
<div style="position:absolute;left:24.3px;top:744px;font:normal 12px/12px 'Liberation Sans',sans-serif;color:#000;white-space:nowrap;transform:scaleX(0.8787);transform-origin:0 0;">Tan</div>
<div style="position:absolute;left:5px;top:759px;width:14px;height:13px;background:#fff;border:1px solid #b9c2d6;box-sizing:border-box"></div>
<svg style="position:absolute;left:6px;top:760px;" width="12" height="11" viewBox="0 0 12 11"><path d="M2 5.5l3 3.5 5-7.5" stroke="#222" stroke-width="1.8" fill="none"/></svg>
<div style="position:absolute;left:24.3px;top:760px;font:normal 12px/12px 'Liberation Sans',sans-serif;color:#000;white-space:nowrap;transform:scaleX(0.9572);transform-origin:0 0;">Quad</div>
<div style="position:absolute;left:5px;top:775px;width:14px;height:13px;background:#fff;border:1px solid #b9c2d6;box-sizing:border-box"></div>
<svg style="position:absolute;left:6px;top:776px;" width="12" height="11" viewBox="0 0 12 11"><path d="M2 5.5l3 3.5 5-7.5" stroke="#222" stroke-width="1.8" fill="none"/></svg>
<div style="position:absolute;left:24.3px;top:776px;font:normal 12px/12px 'Liberation Sans',sans-serif;color:#000;white-space:nowrap;transform:scaleX(1.0179);transform-origin:0 0;">Nodo</div>
<div style="position:absolute;left:5px;top:791px;width:14px;height:13px;background:#fff;border:1px solid #b9c2d6;box-sizing:border-box"></div>
<svg style="position:absolute;left:6px;top:792px;" width="12" height="11" viewBox="0 0 12 11"><path d="M2 5.5l3 3.5 5-7.5" stroke="#222" stroke-width="1.8" fill="none"/></svg>
<div style="position:absolute;left:24.3px;top:792px;font:normal 12px/12px 'Liberation Sans',sans-serif;color:#000;white-space:nowrap;transform:scaleX(0.9432);transform-origin:0 0;">Vertice</div>
<div style="position:absolute;left:5px;top:807px;width:14px;height:13px;background:#fff;border:1px solid #b9c2d6;box-sizing:border-box"></div>
<div style="position:absolute;left:24.3px;top:808px;font:normal 12px/12px 'Liberation Sans',sans-serif;color:#000;white-space:nowrap;transform:scaleX(0.9745);transform-origin:0 0;">Proietta</div>
<div style="position:absolute;left:5px;top:824px;width:14px;height:13px;background:#fff;border:1px solid #b9c2d6;box-sizing:border-box"></div>
<div style="position:absolute;left:24.3px;top:825px;font:normal 12px/12px 'Liberation Sans',sans-serif;color:#000;white-space:nowrap;transform:scaleX(0.9715);transform-origin:0 0;">Disabilita</div>
<div style="position:absolute;left:1719px;top:157px;font:normal 12px/12px 'Liberation Sans',sans-serif;color:#6f6f6f;white-space:nowrap;transform:scaleX(0.9463);transform-origin:0 0;">Livelli</div>
<svg style="position:absolute;left:1902px;top:157px;" width="12" height="12" viewBox="0 0 12 12"><polygon points="11.88,7.17 9.49,8.33 9.33,10.99 6.82,10.12 4.83,11.88 3.67,9.49 1.01,9.33 1.88,6.82 0.12,4.83 2.51,3.67 2.67,1.01 5.18,1.88 7.17,0.12 8.33,2.51 10.99,2.67 10.12,5.18" fill="#c4c4c8"/><circle cx="6" cy="6" r="2" fill="#e9eaee"/></svg>
<svg style="position:absolute;left:1722px;top:183px;" width="186" height="16" viewBox="0 0 186 16"><g><path d="M1.5 2.5l10 1.5 1 3.5-4 7.5z" fill="#fff" stroke="#1a2a90" stroke-width="1.2" stroke-linejoin="round"/><path d="M1.5 2.5l10 1.5 1 3-10-2z" fill="#ff6a30"/><path d="M9 11.5h6M12 8.5v6" stroke="#fff" stroke-width="3.6"/><path d="M9.5 11.5h5M12 9v5" stroke="#000" stroke-width="1.8"/></g><g transform="translate(22,0)" stroke="#b0b0b0" fill="#e6e6e6" stroke-width="1"><path d="M1.5 2l5-1 2 3-1 5-3 1-3-3z"/><path d="M6.5 7l6-1 2 3-2 5-4 0-2-3z"/><path d="M1 11l3 3" stroke-width="1.5"/></g><g transform="translate(44,0)"><path d="M1.5 1.5l12 12M13.5 1.5l-12 12" stroke="#b0b0b0" stroke-width="2.2"/><path d="M1.5 1.5l12 12M13.5 1.5l-12 12" stroke="#e0e0e0" stroke-width="0.8"/></g><g transform="translate(66,0)" fill="#e6e6e6" stroke="#b0b0b0" stroke-width="1.2"><circle cx="6.5" cy="7.5" r="6"/><path d="M6 5.5l7-1.5 1 7-5 3-3-2z"/></g><g transform="translate(88,0)"><path d="M1 10.5l6.5-7 6.5 7z" fill="#e8e8e8" stroke="#b0b0b0" stroke-width="1.3"/></g><g transform="translate(110,0)"><path d="M1 4.5h13l-6.5 7z" fill="#e8e8e8" stroke="#b0b0b0" stroke-width="1.3"/></g><g transform="translate(134,0)"><path d="M9 1v13l-7.5-6.5z" fill="#e8e8e8" stroke="#b0b0b0" stroke-width="1.3"/></g><g transform="translate(154,0)"><path d="M1 1.5h13l-5 6v6l-3 1.5v-7.5z" fill="#2a55d8" stroke="#102a80" stroke-width="1"/><ellipse cx="7.5" cy="2" rx="6" ry="1.3" fill="#7aa0ff"/></g><g transform="translate(179,0)"><path d="M1 2l8 2v6l-4 4-4-6z" fill="#2030a0"/><path d="M0 4l9 0-4 3z" fill="#ff7040"/></g></svg>
<svg style="position:absolute;left:1722px;top:204px;" width="60" height="17" viewBox="0 0 60 17"><rect x="1.5" y="1.5" width="11" height="13" fill="#f0f0f0" stroke="#888" stroke-width="1"/><path d="M1.5 4.5h11M1.5 8h11M1.5 11.5h11M5 1.5v13M8.5 1.5v13" stroke="#999" stroke-width="1"/><rect x="1.5" y="1.5" width="11" height="2.5" fill="#777"/><path d="M23 3.5h11M23 8.5h11M23 13.5h11" stroke="#000" stroke-width="2"/><circle cx="51" cy="8" r="7" fill="url(#gHelp)"/><path d="M48.5 6c0-2 1.3-2.8 2.7-2.8 1.6 0 2.7 1 2.7 2.4 0 1.8-2.1 2.2-2.1 4" stroke="#fff" stroke-width="1.8" fill="none"/><circle cx="51.5" cy="12.5" r="1.1" fill="#fff"/></svg>
<div style="position:absolute;left:1718px;top:172px;width:184px;height:1px;background:#d4d6dc"></div>
<div style="position:absolute;left:1719px;top:228px;width:175px;height:21px;background:#fff;border:1px solid #b9c4da;border-radius:11px;box-sizing:border-box"></div>
<svg style="position:absolute;left:1722px;top:232px;" width="14" height="14" viewBox="0 0 14 14"><circle cx="5.5" cy="5.5" r="4.3" stroke="#333" stroke-width="1.3" fill="none"/><path d="M8.5 8.5l4 4" stroke="#333" stroke-width="1.5"/></svg>
<div style="position:absolute;left:1737.7px;top:234px;font:normal 12px/12px 'Liberation Sans',sans-serif;color:#777;white-space:nowrap;transform:scaleX(0.8966);transform-origin:0 0;">Cerca</div>
<div style="position:absolute;left:1718px;top:255px;width:176px;height:761px;background:#fff"></div>
<div style="position:absolute;left:1718px;top:277px;width:176px;height:1px;background:#d6dbe6"></div>
<div style="position:absolute;left:1797px;top:255px;width:1px;height:22px;background:#dde1ea"></div>
<div style="position:absolute;left:1817px;top:255px;width:1px;height:22px;background:#dde1ea"></div>
<div style="position:absolute;left:1837px;top:255px;width:1px;height:22px;background:#dde1ea"></div>
<div style="position:absolute;left:1857px;top:255px;width:1px;height:22px;background:#dde1ea"></div>
<div style="position:absolute;left:1877px;top:255px;width:1px;height:22px;background:#dde1ea"></div>
<div style="position:absolute;left:1723.4px;top:261px;font:normal 12px/12px 'Liberation Sans',sans-serif;color:#000;white-space:nowrap;transform:scaleX(0.9877);transform-origin:0 0;">Livello</div>
<div style="position:absolute;left:1883.7px;top:261px;font:normal 12px/12px 'Liberation Sans',sans-serif;color:#000;white-space:nowrap;transform:scaleX(1.0004);transform-origin:0 0;">M</div>
<div style="position:absolute;left:1735.5px;top:282px;font:bold 12px/12px 'Liberation Sans',sans-serif;color:#000;white-space:nowrap;transform:scaleX(0.9813);transform-origin:0 0;">Predefinito</div>
<svg style="position:absolute;left:1802px;top:281px;" width="14" height="11" viewBox="0 0 14 11"><path d="M1 6l3.5 4 8.5-9" stroke="#222" stroke-width="1.4" fill="none"/></svg>
<div style="position:absolute;left:1861px;top:280px;width:14px;height:14px;background:#000"></div>
<svg style="position:absolute;left:1879px;top:280px;" width="14" height="14" viewBox="0 0 14 14"><circle cx="7.3" cy="7" r="6" stroke="#666" stroke-width="1" fill="#fff"/></svg>
<div style="position:absolute;left:1718px;top:296px;width:176px;height:1px;background:repeating-linear-gradient(90deg,#c8ccd4 0 1px,transparent 1px 3px)"></div>
<div style="position:absolute;left:1735.5px;top:301px;font:normal 12px/12px 'Liberation Sans',sans-serif;color:#000;white-space:nowrap;transform:scaleX(0.9408);transform-origin:0 0;">Livello 01</div>
<svg style="position:absolute;left:1823px;top:300px;" width="10" height="13" viewBox="0 0 10 13"><path d="M5 1C2 1 1 3 1 4.5c0 2 2 3 2 5h4c0-2 2-3 2-5C9 3 8 1 5 1z" fill="#f5d000" stroke="#b08000" stroke-width="0.8"/><path d="M3.3 10h3.4v2h-3.4z" fill="#d08000"/></svg>
<svg style="position:absolute;left:1842px;top:299px;" width="14" height="14" viewBox="0 0 14 14"><rect x="1.5" y="6.5" width="8" height="6" fill="#f6de50" stroke="#333" stroke-width="1"/><path d="M8.5 6.5V3.5a2 2 0 0 1 4 0V5" stroke="#333" stroke-width="1.1" fill="none"/></svg>
<div style="position:absolute;left:1861px;top:299px;width:14px;height:14px;background:#c00000;border:1px solid #000;box-sizing:border-box"></div>
<svg style="position:absolute;left:1879px;top:299px;" width="14" height="14" viewBox="0 0 14 14"><circle cx="7.3" cy="7" r="6" stroke="#666" stroke-width="1" fill="#fff"/></svg>
<div style="position:absolute;left:1718px;top:315px;width:176px;height:1px;background:repeating-linear-gradient(90deg,#c8ccd4 0 1px,transparent 1px 3px)"></div>
<div style="position:absolute;left:1735.5px;top:320px;font:normal 12px/12px 'Liberation Sans',sans-serif;color:#000;white-space:nowrap;transform:scaleX(0.9408);transform-origin:0 0;">Livello 02</div>
<svg style="position:absolute;left:1823px;top:319px;" width="10" height="13" viewBox="0 0 10 13"><path d="M5 1C2 1 1 3 1 4.5c0 2 2 3 2 5h4c0-2 2-3 2-5C9 3 8 1 5 1z" fill="#f5d000" stroke="#b08000" stroke-width="0.8"/><path d="M3.3 10h3.4v2h-3.4z" fill="#d08000"/></svg>
<svg style="position:absolute;left:1842px;top:318px;" width="14" height="14" viewBox="0 0 14 14"><rect x="1.5" y="6.5" width="8" height="6" fill="#f6de50" stroke="#333" stroke-width="1"/><path d="M8.5 6.5V3.5a2 2 0 0 1 4 0V5" stroke="#333" stroke-width="1.1" fill="none"/></svg>
<div style="position:absolute;left:1861px;top:318px;width:14px;height:14px;background:#7b2fcc;border:1px solid #000;box-sizing:border-box"></div>
<svg style="position:absolute;left:1879px;top:318px;" width="14" height="14" viewBox="0 0 14 14"><circle cx="7.3" cy="7" r="6" stroke="#666" stroke-width="1" fill="#fff"/></svg>
<div style="position:absolute;left:1718px;top:334px;width:176px;height:1px;background:repeating-linear-gradient(90deg,#c8ccd4 0 1px,transparent 1px 3px)"></div>
<div style="position:absolute;left:1735.5px;top:339px;font:normal 12px/12px 'Liberation Sans',sans-serif;color:#000;white-space:nowrap;transform:scaleX(0.9408);transform-origin:0 0;">Livello 03</div>
<svg style="position:absolute;left:1823px;top:338px;" width="10" height="13" viewBox="0 0 10 13"><path d="M5 1C2 1 1 3 1 4.5c0 2 2 3 2 5h4c0-2 2-3 2-5C9 3 8 1 5 1z" fill="#f5d000" stroke="#b08000" stroke-width="0.8"/><path d="M3.3 10h3.4v2h-3.4z" fill="#d08000"/></svg>
<svg style="position:absolute;left:1842px;top:337px;" width="14" height="14" viewBox="0 0 14 14"><rect x="1.5" y="6.5" width="8" height="6" fill="#f6de50" stroke="#333" stroke-width="1"/><path d="M8.5 6.5V3.5a2 2 0 0 1 4 0V5" stroke="#333" stroke-width="1.1" fill="none"/></svg>
<div style="position:absolute;left:1861px;top:337px;width:14px;height:14px;background:#0000ff;border:1px solid #000;box-sizing:border-box"></div>
<svg style="position:absolute;left:1879px;top:337px;" width="14" height="14" viewBox="0 0 14 14"><circle cx="7.3" cy="7" r="6" stroke="#666" stroke-width="1" fill="#fff"/></svg>
<div style="position:absolute;left:1718px;top:353px;width:176px;height:1px;background:repeating-linear-gradient(90deg,#c8ccd4 0 1px,transparent 1px 3px)"></div>
<div style="position:absolute;left:1735.5px;top:358px;font:normal 12px/12px 'Liberation Sans',sans-serif;color:#000;white-space:nowrap;transform:scaleX(0.9408);transform-origin:0 0;">Livello 04</div>
<svg style="position:absolute;left:1823px;top:357px;" width="10" height="13" viewBox="0 0 10 13"><path d="M5 1C2 1 1 3 1 4.5c0 2 2 3 2 5h4c0-2 2-3 2-5C9 3 8 1 5 1z" fill="#f5d000" stroke="#b08000" stroke-width="0.8"/><path d="M3.3 10h3.4v2h-3.4z" fill="#d08000"/></svg>
<svg style="position:absolute;left:1842px;top:356px;" width="14" height="14" viewBox="0 0 14 14"><rect x="1.5" y="6.5" width="8" height="6" fill="#f6de50" stroke="#333" stroke-width="1"/><path d="M8.5 6.5V3.5a2 2 0 0 1 4 0V5" stroke="#333" stroke-width="1.1" fill="none"/></svg>
<div style="position:absolute;left:1861px;top:356px;width:14px;height:14px;background:#007000;border:1px solid #000;box-sizing:border-box"></div>
<svg style="position:absolute;left:1879px;top:356px;" width="14" height="14" viewBox="0 0 14 14"><circle cx="7.3" cy="7" r="6" stroke="#666" stroke-width="1" fill="#fff"/></svg>
<div style="position:absolute;left:1718px;top:372px;width:176px;height:1px;background:repeating-linear-gradient(90deg,#c8ccd4 0 1px,transparent 1px 3px)"></div>
<div style="position:absolute;left:1735.5px;top:377px;font:normal 12px/12px 'Liberation Sans',sans-serif;color:#000;white-space:nowrap;transform:scaleX(0.9408);transform-origin:0 0;">Livello 05</div>
<svg style="position:absolute;left:1823px;top:376px;" width="10" height="13" viewBox="0 0 10 13"><path d="M5 1C2 1 1 3 1 4.5c0 2 2 3 2 5h4c0-2 2-3 2-5C9 3 8 1 5 1z" fill="#f5d000" stroke="#b08000" stroke-width="0.8"/><path d="M3.3 10h3.4v2h-3.4z" fill="#d08000"/></svg>
<svg style="position:absolute;left:1842px;top:375px;" width="14" height="14" viewBox="0 0 14 14"><rect x="1.5" y="6.5" width="8" height="6" fill="#f6de50" stroke="#333" stroke-width="1"/><path d="M8.5 6.5V3.5a2 2 0 0 1 4 0V5" stroke="#333" stroke-width="1.1" fill="none"/></svg>
<div style="position:absolute;left:1861px;top:375px;width:14px;height:14px;background:#ffffff;border:1px solid #000;box-sizing:border-box"></div>
<svg style="position:absolute;left:1879px;top:375px;" width="14" height="14" viewBox="0 0 14 14"><circle cx="7.3" cy="7" r="6" stroke="#666" stroke-width="1" fill="#fff"/></svg>
<div style="position:absolute;left:1718px;top:391px;width:176px;height:1px;background:repeating-linear-gradient(90deg,#c8ccd4 0 1px,transparent 1px 3px)"></div>
<div style="position:absolute;left:1725px;top:1003px;width:46px;height:8px;background:#c4c4c4;border-radius:4px"></div>
<div style="position:absolute;left:1898px;top:209px;width:10px;height:807px;background:#dcdde2;border-radius:4px 0 0 0"></div>
<svg style="position:absolute;left:1900px;top:219px;" width="8" height="16" viewBox="0 0 8 16"><circle cx="8" cy="8" r="6" fill="none" stroke="url(#cw)" stroke-width="3"/></svg>
<svg style="position:absolute;left:1900px;top:256px;" width="8" height="16" viewBox="0 0 8 16"><rect x="1" y="1" width="10" height="9" fill="#ddd" stroke="#000" stroke-width="1.5"/><path d="M3 12h6" stroke="#000" stroke-width="2"/></svg>
<svg style="position:absolute;left:1899px;top:289px;" width="9" height="16" viewBox="0 0 9 16"><rect x="1" y="1" width="10" height="13" fill="#c8c8d0" stroke="#333" stroke-width="1"/><circle cx="7" cy="8" r="4" fill="#3060e0"/></svg>
<div style="position:absolute;left:7px;top:1020px;width:14px;height:14px;background:#f4f4f4;border:2px solid #444;border-left-width:4px;box-sizing:border-box"></div>
<div style="position:absolute;left:46px;top:1022px;font:normal 12px/12px 'Liberation Sans',sans-serif;color:#222;white-space:nowrap;transform:scaleX(0.9401);transform-origin:0 0;">PianoC</div>
<div style="position:absolute;left:128.3px;top:1022px;font:normal 12px/12px 'Liberation Sans',sans-serif;color:#222;white-space:nowrap;transform:scaleX(0.9449);transform-origin:0 0;">x 590.00</div>
<div style="position:absolute;left:213px;top:1022px;font:normal 12px/12px 'Liberation Sans',sans-serif;color:#222;white-space:nowrap;transform:scaleX(0.9558);transform-origin:0 0;">y 120.00</div>
<div style="position:absolute;left:313px;top:1022px;font:normal 12px/12px 'Liberation Sans',sans-serif;color:#222;white-space:nowrap;transform:scaleX(0.9370);transform-origin:0 0;">z 0</div>
<div style="position:absolute;left:385.7px;top:1022px;font:normal 12px/12px 'Liberation Sans',sans-serif;color:#222;white-space:nowrap;transform:scaleX(0.9931);transform-origin:0 0;">Centimetri</div>
<div style="position:absolute;left:467px;top:1018px;width:16px;height:17px;background:#000"></div>
<div style="position:absolute;left:489.7px;top:1022px;font:normal 12px/12px 'Liberation Sans',sans-serif;color:#222;white-space:nowrap;transform:scaleX(1.0023);transform-origin:0 0;">Predefinito</div>
<div style="position:absolute;left:656px;top:1017px;width:106px;height:19px;background:#cfd9ee;border-radius:3px"></div>
<div style="position:absolute;left:869px;top:1017px;width:51px;height:19px;background:#cfd9ee;border-radius:3px"></div>
<div style="position:absolute;left:923px;top:1017px;width:79px;height:19px;background:#cfd9ee;border-radius:3px"></div>
<div style="position:absolute;left:1005px;top:1017px;width:114px;height:19px;background:#cfd9ee;border-radius:3px"></div>
<div style="position:absolute;left:1418px;top:1017px;width:45px;height:19px;background:#cfd9ee;border-radius:3px"></div>
<div style="position:absolute;left:664.2px;top:1021px;font:bold 12px/12px 'Liberation Sans',sans-serif;color:#222;white-space:nowrap;transform:scaleX(0.9780);transform-origin:0 0;">Snap alla griglia</div>
<div style="position:absolute;left:773.6px;top:1021px;font:normal 12px/12px 'Liberation Sans',sans-serif;color:#444;white-space:nowrap;transform:scaleX(1.0498);transform-origin:0 0;">Orto</div>
<div style="position:absolute;left:818.9px;top:1021px;font:normal 12px/12px 'Liberation Sans',sans-serif;color:#444;white-space:nowrap;transform:scaleX(0.9332);transform-origin:0 0;">Planare</div>
<div style="position:absolute;left:877.4px;top:1021px;font:bold 12px/12px 'Liberation Sans',sans-serif;color:#222;white-space:nowrap;transform:scaleX(0.9346);transform-origin:0 0;">Osnap</div>
<div style="position:absolute;left:931.1px;top:1021px;font:bold 12px/12px 'Liberation Sans',sans-serif;color:#222;white-space:nowrap;transform:scaleX(0.9821);transform-origin:0 0;">SmartTrack</div>
<div style="position:absolute;left:1013.2px;top:1021px;font:bold 12px/12px 'Liberation Sans',sans-serif;color:#222;white-space:nowrap;transform:scaleX(0.9745);transform-origin:0 0;">Gumball (PianoC)</div>
<svg style="position:absolute;left:1128px;top:1020px;" width="11" height="13" viewBox="0 0 11 13"><rect x="0.5" y="5.5" width="10" height="7" rx="1" fill="#f4f4f4" stroke="#aaa"/><path d="M2.5 5.5V3.5a3 3 0 0 1 6 0v2" stroke="#aaa" fill="none"/></svg>
<div style="position:absolute;left:1149px;top:1021px;font:normal 12px/12px 'Liberation Sans',sans-serif;color:#444;white-space:nowrap;transform:scaleX(1.0010);transform-origin:0 0;">PianoC automatico (oggetto)</div>
<div style="position:absolute;left:1330.2px;top:1021px;font:normal 12px/12px 'Liberation Sans',sans-serif;color:#444;white-space:nowrap;transform:scaleX(0.9604);transform-origin:0 0;">Registra storia</div>
<div style="position:absolute;left:1426.6px;top:1021px;font:bold 12px/12px 'Liberation Sans',sans-serif;color:#222;white-space:nowrap;transform:scaleX(0.9569);transform-origin:0 0;">Filtro</div>
<div style="position:absolute;left:1477.7px;top:1021px;font:normal 12px/12px 'Liberation Sans',sans-serif;color:#444;white-space:nowrap;transform:scaleX(0.9389);transform-origin:0 0;">Utilizzo CPU: 6.3 %</div>
<div style="position:absolute;left:1898px;top:1020px;width:10px;height:14px;border:2px solid #333;border-right:none;box-sizing:border-box;background:#fff"></div>
<div style="position:absolute;left:739px;top:398px;width:443px;height:236px;box-shadow:2px 3px 6px rgba(0,0,0,0.35);background:#6b6f78;z-index:5"></div>
<div style="position:absolute;left:740px;top:399px;width:441px;height:234px;background:#e9eaee;z-index:6"></div>
<div style="position:absolute;left:740px;top:399px;width:441px;height:30px;background:#fff;z-index:6"></div>
<div style="position:absolute;left:748.6px;top:408px;font:normal 12px/12px 'Liberation Sans',sans-serif;color:#8a8a8a;white-space:nowrap;transform:scaleX(0.9552);transform-origin:0 0;z-index:7;">Opzioni di esportazione STL</div>
<svg style="position:absolute;left:1160px;top:407px;z-index:7" width="13" height="13"><path d="M1 1l11 11M12 1L1 12" stroke="#555" stroke-width="1.1"/></svg>
<div style="position:absolute;left:752.3px;top:437px;font:normal 12px/12px 'Liberation Sans',sans-serif;color:#000;white-space:nowrap;transform:scaleX(0.9983);transform-origin:0 0;z-index:7;">Tipo file</div>
<div style="position:absolute;left:918px;top:437px;font:normal 12px/12px 'Liberation Sans',sans-serif;color:#000;white-space:nowrap;transform:scaleX(0.9770);transform-origin:0 0;z-index:7;">Dimensione approssimata: 722522 triangoli</div>
<div style="position:absolute;left:752px;top:461px;width:417px;height:1px;background:#a0a0a0;z-index:7"></div>
<div style="position:absolute;left:752px;top:462px;width:417px;height:1px;background:#fff;z-index:7"></div>
<svg style="position:absolute;left:764px;top:474px;z-index:7" width="15" height="34"><circle cx="7.5" cy="7.4" r="6" fill="#fff" stroke="#333" stroke-width="1"/><circle cx="7.5" cy="7.4" r="3.3" fill="#333"/><circle cx="7.5" cy="26.4" r="6" fill="#fff" stroke="#333" stroke-width="1"/></svg>
<div style="position:absolute;left:781px;top:476px;font:normal 12px/12px 'Liberation Sans',sans-serif;color:#000;white-space:nowrap;transform:scaleX(0.9664);transform-origin:0 0;z-index:7;">Binario</div>
<div style="position:absolute;left:918px;top:474px;font:normal 12px/12px 'Liberation Sans',sans-serif;color:#000;white-space:nowrap;transform:scaleX(0.9571);transform-origin:0 0;z-index:7;">36.1 Mb</div>
<div style="position:absolute;left:781px;top:495px;font:normal 12px/12px 'Liberation Sans',sans-serif;color:#000;white-space:nowrap;transform:scaleX(0.9710);transform-origin:0 0;z-index:7;">Ascii</div>
<div style="position:absolute;left:918px;top:494px;font:normal 12px/12px 'Liberation Sans',sans-serif;color:#000;white-space:nowrap;transform:scaleX(0.9494);transform-origin:0 0;z-index:7;">201.6 Mb</div>
<div style="position:absolute;left:752px;top:517px;width:417px;height:1px;background:#a0a0a0;z-index:7"></div>
<div style="position:absolute;left:752px;top:518px;width:417px;height:1px;background:#fff;z-index:7"></div>
<div style="position:absolute;left:765px;top:531px;width:13px;height:13px;background:#fff;border:1px solid #333;box-sizing:border-box;z-index:7"></div>
<div style="position:absolute;left:765px;top:569px;width:13px;height:13px;background:#fff;border:1px solid #333;box-sizing:border-box;z-index:7"></div>
<div style="position:absolute;left:781.6px;top:532px;font:normal 12px/12px 'Liberation Sans',sans-serif;color:#000;white-space:nowrap;transform:scaleX(0.9854);transform-origin:0 0;z-index:7;">Esporta oggetti aperti</div>
<div style="position:absolute;left:781.6px;top:570px;font:normal 12px/12px 'Liberation Sans',sans-serif;color:#000;white-space:nowrap;transform:scaleX(0.9686);transform-origin:0 0;z-index:7;">Usa sempre questi settaggi. Non visualizzare più questa finestra.</div>
<div style="position:absolute;left:754px;top:595px;width:86px;height:24px;background:#e1e1e1;border:2px solid #0078d7;box-sizing:border-box;z-index:7"></div>
<div style="position:absolute;left:789.3px;top:601px;font:normal 12px/12px 'Liberation Sans',sans-serif;color:#000;white-space:nowrap;transform:scaleX(0.9113);transform-origin:0 0;z-index:7;">OK</div>
<div style="position:absolute;left:848px;top:595px;width:86px;height:24px;background:#e1e1e1;border:1px solid #adadad;box-sizing:border-box;z-index:7"></div>
<div style="position:absolute;left:870.5px;top:601px;font:normal 12px/12px 'Liberation Sans',sans-serif;color:#000;white-space:nowrap;transform:scaleX(1.0117);transform-origin:0 0;z-index:7;">Annulla</div>
<div style="position:absolute;left:942px;top:595px;width:131px;height:24px;background:#e1e1e1;border:1px solid #adadad;box-sizing:border-box;z-index:7"></div>
<div style="position:absolute;left:973px;top:601px;font:normal 12px/12px 'Liberation Sans',sans-serif;color:#000;white-space:nowrap;transform:scaleX(0.9688);transform-origin:0 0;z-index:7;">Regola mesh</div>
<div style="position:absolute;left:1081px;top:595px;width:86px;height:24px;background:#e1e1e1;border:1px solid #adadad;box-sizing:border-box;z-index:7"></div>
<div style="position:absolute;left:1111.5px;top:601px;font:normal 12px/12px 'Liberation Sans',sans-serif;color:#000;white-space:nowrap;transform:scaleX(1.0495);transform-origin:0 0;z-index:7;">Aiuti</div>
</body></html>
